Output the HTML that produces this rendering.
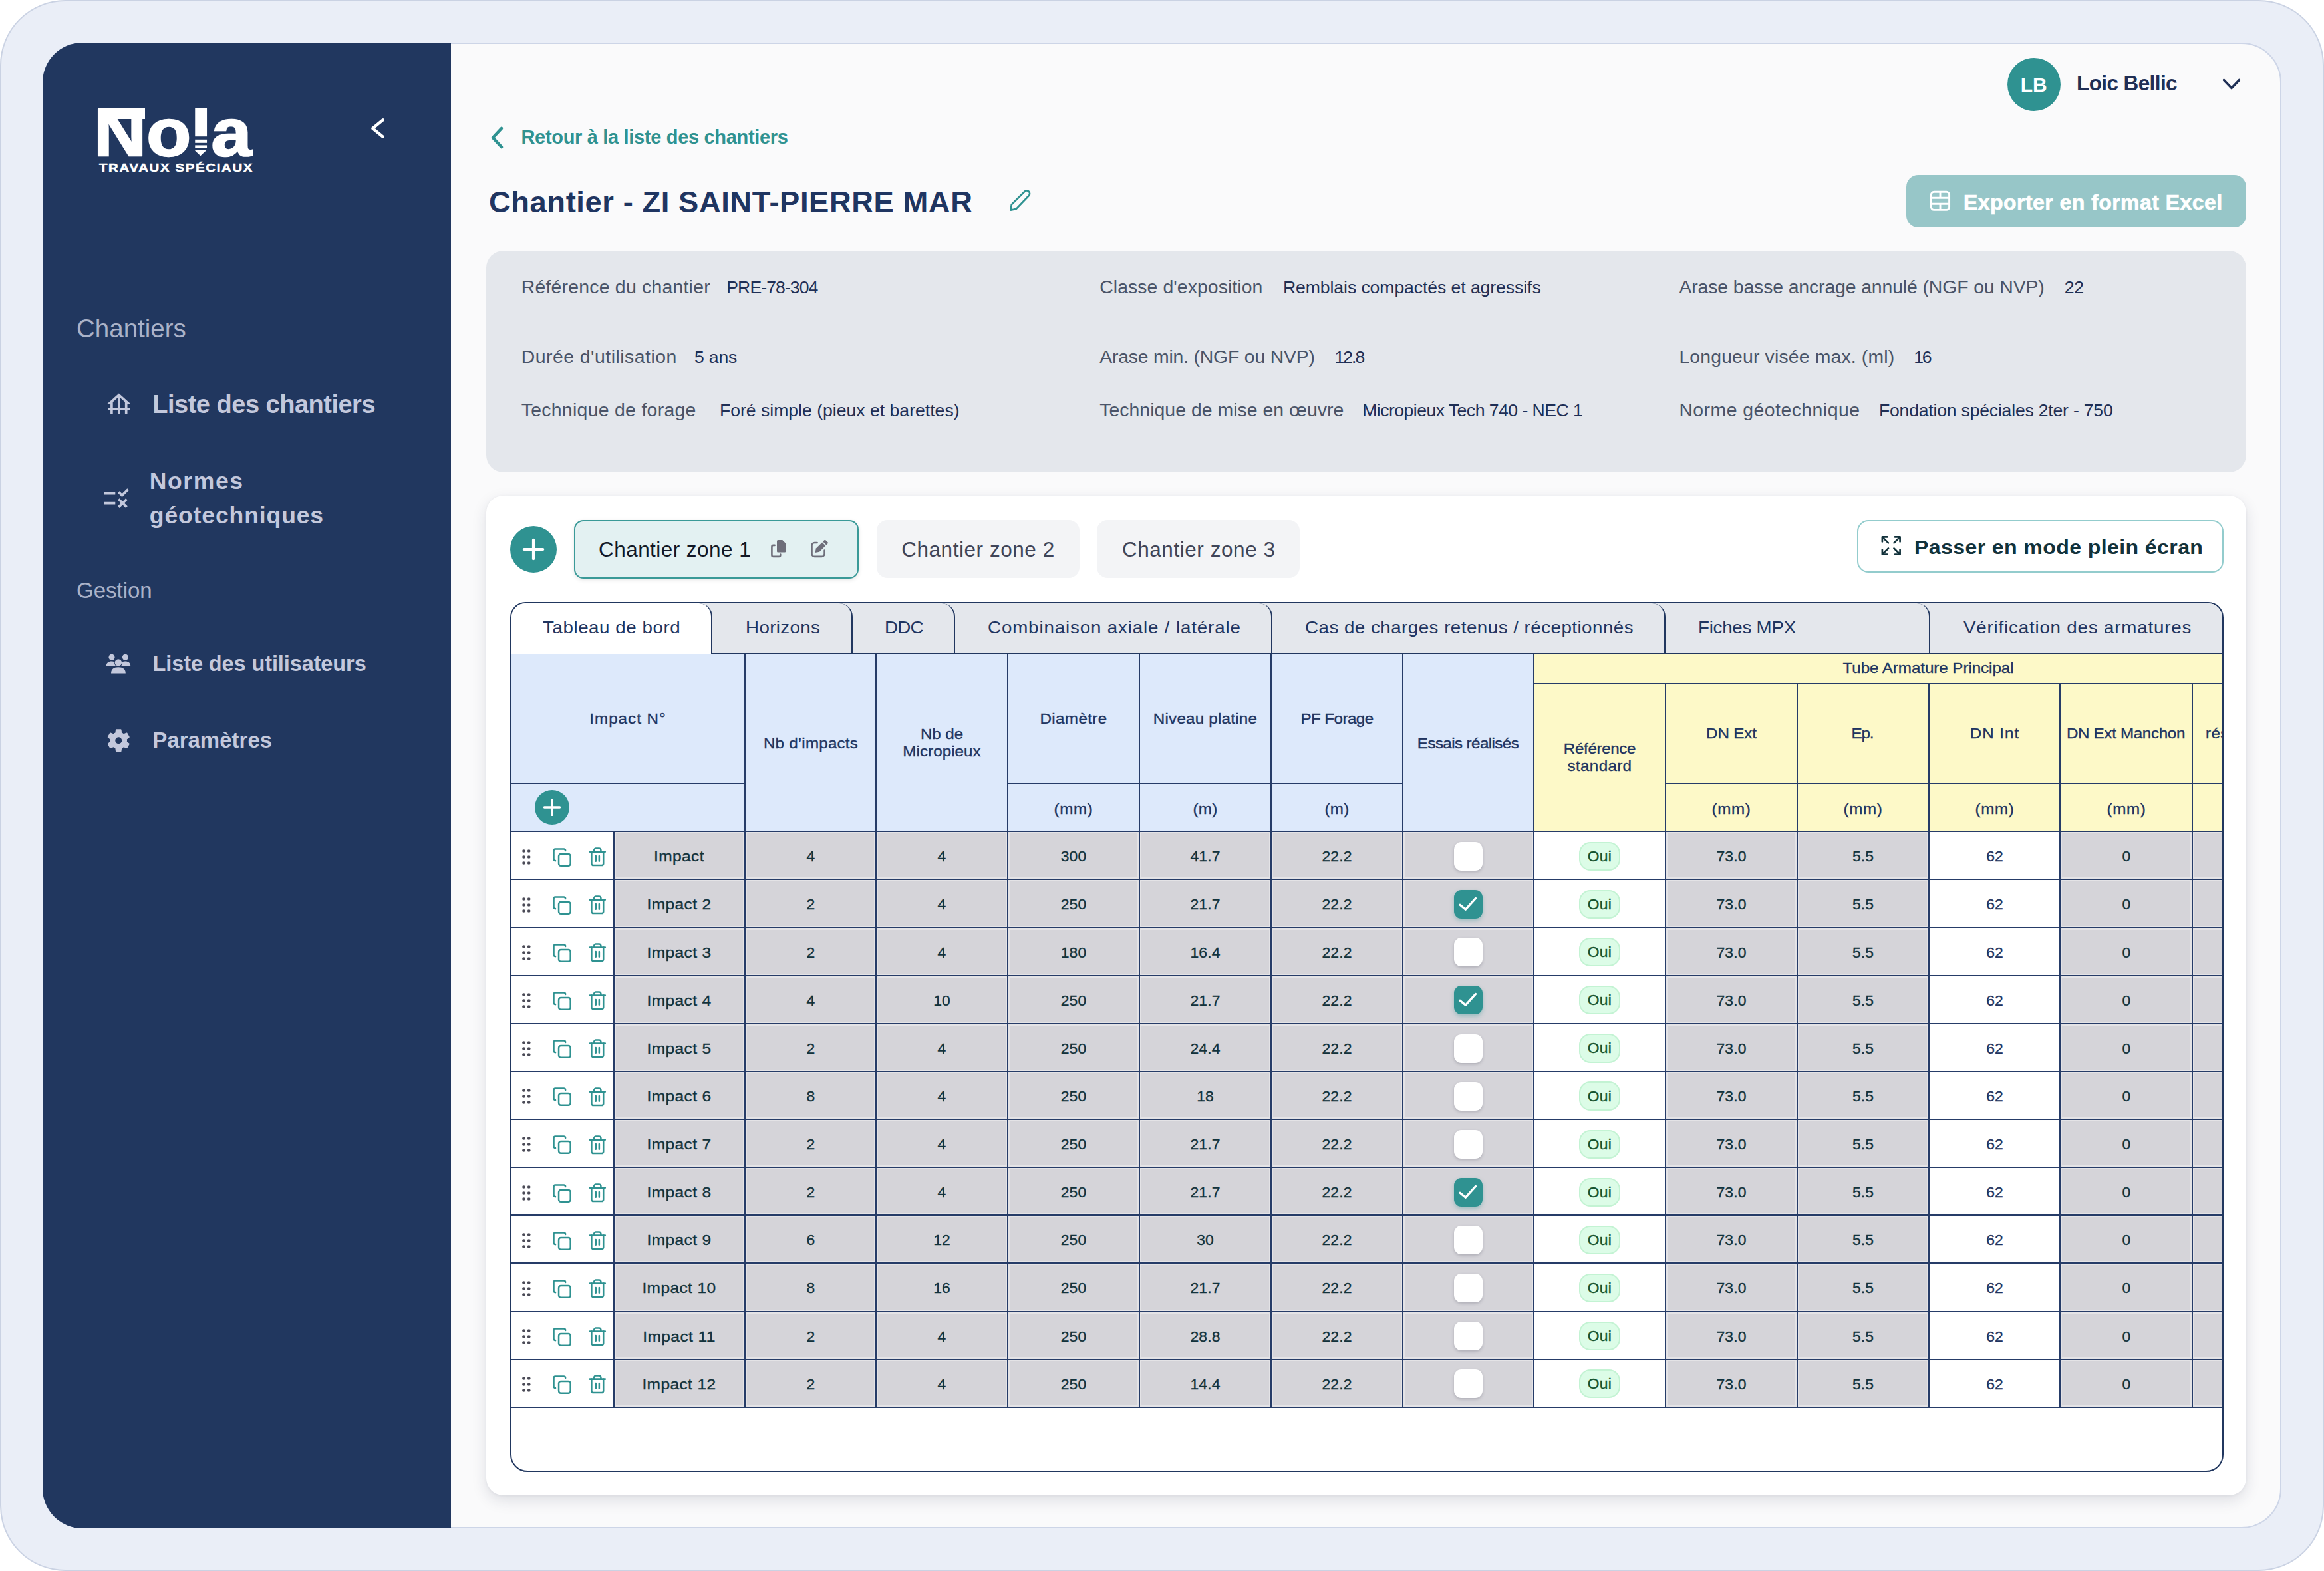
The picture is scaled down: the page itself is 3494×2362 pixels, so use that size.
<!DOCTYPE html>
<html lang="fr"><head><meta charset="utf-8"><title>Nola - Chantier ZI SAINT-PIERRE MAR</title>
<style>
html,body{margin:0;padding:0;}
body{width:3494px;height:2362px;position:relative;overflow:hidden;background:#fff;font-family:"Liberation Sans",sans-serif;}
.b{position:absolute;box-sizing:border-box;}
.t{position:absolute;white-space:nowrap;}
.ln{position:absolute;background:#263c68;}
.m{-webkit-text-stroke:0.35px currentColor;}
.gc{background:#d5d4d9;box-shadow:inset 0 0 0 2px #e4e3e6;}
</style></head><body>
<div class="b " style="left:0.00px;top:0.00px;width:3494.00px;height:2362.00px;background:#eaeef7;border:2px solid #cad2e3;border-radius:98px;"></div>
<div class="b " style="left:64.00px;top:64.00px;width:3366.00px;height:2234.00px;background:#fafafb;border:2px solid #cdd5e7;border-radius:60px;"></div>
<aside>
<div class="b " style="left:64.00px;top:64.00px;width:614.00px;height:2234.00px;background:#21375f;border-radius:60px 0 0 60px;"></div>
<div class="t" style="top:149px;font-size:101px;line-height:101px;font-weight:700;color:#fff;left:140.90px;-webkit-text-stroke:2.5px #fff;transform:scaleX(1.085);transform-origin:0 0;">Nola</div>
<div class="t" style="top:244px;font-size:16.3px;line-height:16.3px;font-weight:700;color:#fff;letter-spacing:1.35px;left:148.60px;-webkit-text-stroke:0.5px #fff;transform:scaleX(1.25);transform-origin:0 0;">TRAVAUX SPÉCIAUX</div>
<div class="b " style="left:148.00px;top:162.00px;width:70.00px;height:16.60px;background:#fff;"></div>
<div class="b " style="left:289.00px;top:150.00px;width:26.00px;height:11.80px;background:#21375f;"></div>
<svg class="b" style="left:289.00px;top:202.00px;" width="26" height="36" viewBox="289 202 26 36"><g fill="#21375f"><rect x="289" y="205.2" width="26" height="4.6"/><rect x="289" y="214.8" width="26" height="3.6"/><rect x="289" y="222.4" width="26" height="3.6"/><path d="M289 226 L292.6 226 L301.4 234.2 L310.2 226 L315 226 L315 238 L289 238 Z"/></g></svg>
<svg class="b" style="left:550.00px;top:170.00px;" width="40" height="46" viewBox="550 170 40 46"><path d="M575.8 180.3 L560.3 193 L575.8 205.7" fill="none" stroke="#fff" stroke-width="4.4" stroke-linecap="round" stroke-linejoin="round"/></svg>
<nav>
<div class="t" style="top:475px;font-size:38.5px;line-height:38.5px;font-weight:400;color:#aab2c8;left:115.00px;">Chantiers</div>
<div class="t" style="top:589px;font-size:38px;line-height:38px;font-weight:700;color:#c3c8dc;letter-spacing:-0.5px;left:229.30px;">Liste des chantiers</div>
<div class="t" style="top:706px;font-size:35.5px;line-height:35.5px;font-weight:700;color:#c3c8dc;letter-spacing:1.6px;left:224.80px;">Normes</div>
<div class="t" style="top:758px;font-size:35.5px;line-height:35.5px;font-weight:700;color:#c3c8dc;letter-spacing:0.9px;left:224.80px;">géotechniques</div>
<div class="t" style="top:871px;font-size:33px;line-height:33px;font-weight:400;color:#aab2c8;left:115.00px;">Gestion</div>
<div class="t" style="top:982px;font-size:32.5px;line-height:32.5px;font-weight:700;color:#c3c8dc;letter-spacing:-0.1px;left:229.50px;">Liste des utilisateurs</div>
<div class="t" style="top:1096px;font-size:33px;line-height:33px;font-weight:700;color:#c3c8dc;left:229.30px;">Paramètres</div>
<svg class="b" style="left:157.00px;top:586.40px;" width="43.6" height="43.6" viewBox="0 0 24 24"><path fill="#c3c8dc" d="M19 12h3L12 3 2 12h3v3H3v2h2v3h2v-3h4v3h2v-3h4v3h2v-3h2v-2h-2v-3zM7 15v-4.81l4-3.6V15H7zm6 0V6.59l4 3.6V15h-4z"/></svg>
<svg class="b" style="left:152.80px;top:727.10px;" width="44.3" height="44.3" viewBox="0 0 24 24"><path fill="#c3c8dc" d="M16.54 11L13 7.46l1.41-1.41 2.12 2.12 4.24-4.24 1.41 1.41L16.54 11zM11 7H2v2h9V7zm10 6.41L19.59 12 17 14.59 14.41 12 13 13.41 15.59 16 13 18.59 14.41 20 17 17.41 19.59 20 21 18.59 18.41 16 21 13.41zM11 15H2v2h9v-2z"/></svg>
<svg class="b" style="left:156.00px;top:980.00px;" width="44" height="36" viewBox="156 980 44 36"><g fill="#c3c8dc"><circle cx="168" cy="988.3" r="4.5"/><circle cx="188.4" cy="988.3" r="4.5"/><circle cx="177.9" cy="996.4" r="5.2"/><path d="M159.9 1001.2 c0 -4.2 3 -6.6 8.1 -6.6 c1.6 0 3 0.3 4.1 0.8 c-0.4 2.4 0.6 4.5 2.2 5.8 z"/><path d="M196.2 1001.2 c0 -4.2 -3 -6.6 -8.1 -6.6 c-1.6 0 -3 0.3 -4.1 0.8 c0.4 2.4 -0.6 4.5 -2.2 5.8 z"/><path d="M167 1012.4 c0 -6 4 -9.1 10.9 -9.1 c6.9 0 10.9 3.1 10.9 9.1 z"/></g></svg>
<svg class="b" style="left:156.70px;top:1091.50px;" width="42.5" height="42.5" viewBox="0 0 24 24"><path fill="#c3c8dc" fill-rule="evenodd" d="M19.14 12.94c.04-.3.06-.61.06-.94 0-.32-.02-.64-.07-.94l2.03-1.58c.18-.14.23-.41.12-.61l-1.92-3.32c-.12-.22-.37-.29-.59-.22l-2.39.96c-.5-.38-1.03-.7-1.62-.94l-.36-2.54c-.04-.24-.24-.41-.48-.41h-3.84c-.24 0-.43.17-.47.41l-.36 2.54c-.59.24-1.13.57-1.62.94l-2.39-.96c-.22-.08-.47 0-.59.22L2.74 8.87c-.12.21-.08.47.12.61l2.03 1.58c-.05.3-.09.63-.09.94s.02.64.07.94l-2.03 1.58c-.18.14-.23.41-.12.61l1.92 3.32c.12.22.37.29.59.22l2.39-.96c.5.38 1.03.7 1.62.94l.36 2.54c.05.24.24.41.48.41h3.84c.24 0 .44-.17.47-.41l.36-2.54c.59-.24 1.13-.56 1.62-.94l2.39.96c.22.08.47 0 .59-.22l1.92-3.32c.12-.22.07-.47-.12-.61l-2.01-1.58zM12 14.8c-1.55 0-2.8-1.25-2.8-2.8s1.25-2.8 2.8-2.8 2.8 1.25 2.8 2.8-1.25 2.8-2.8 2.8z"/></svg>
</nav></aside>
<header>
<div class="b " style="left:3017.70px;top:87.00px;width:80.00px;height:80.00px;background:#2f9291;border-radius:50%;"></div>
<div class="t" style="top:113px;font-size:30px;line-height:30px;font-weight:700;color:#fff;left:2057.70px;width:2000px;text-align:center;">LB</div>
<div class="t" style="top:110px;font-size:31.5px;line-height:31.5px;font-weight:700;color:#1f2f55;letter-spacing:-0.6px;left:3122.00px;">Loic Bellic</div>
<svg class="b" style="left:3339.50px;top:117.00px;" width="30" height="20" viewBox="0 0 30 20"><path d="M3.5 3.5 L15 15.5 L26.5 3.5" fill="none" stroke="#1f2f55" stroke-width="3.6" stroke-linecap="round" stroke-linejoin="round"/></svg>
</header>
<main>
<svg class="b" style="left:734.00px;top:188.00px;" width="28" height="38" viewBox="0 0 28 38"><path d="M20 5 L7 19 L20 33" fill="none" stroke="#2f9291" stroke-width="4.6" stroke-linecap="round" stroke-linejoin="round"/></svg>
<div class="t" style="top:192px;font-size:29px;line-height:29px;font-weight:700;color:#2f9291;letter-spacing:-0.32px;left:783.50px;">Retour à la liste des chantiers</div>
<div class="t" style="top:283px;font-size:43.6px;line-height:43.6px;font-weight:700;color:#1f3561;letter-spacing:0.55px;left:734.50px;transform:scaleX(1.04);transform-origin:0 50%;">Chantier - ZI SAINT-PIERRE MAR</div>
<svg class="b" style="left:1510.00px;top:280.00px;" width="46" height="44" viewBox="1510 280 46 44"><path d="M1520.8 307.4 L1540.8 287.5 A4.4 4.4 0 0 1 1547 293.7 L1527.9 313.9 L1519.6 315.6 Z" fill="none" stroke="#2f9291" stroke-width="2.7" stroke-linejoin="round"/></svg>
<div class="b " style="left:2866.00px;top:263.00px;width:511.00px;height:78.50px;background:#97c6c8;border-radius:18px;"></div>
<svg class="b" style="left:2898.00px;top:283.00px;" width="38" height="38" viewBox="2898 283 38 38"><g fill="none" stroke="#fff" stroke-width="2.9"><rect x="2903.4" y="288.2" width="27.2" height="27.2" rx="4.2"/><path d="M2903.4 297.3 H2930.6 M2903.4 306.2 H2930.6 M2917 288.2 V297.3 M2917 306.2 V315.4"/></g></svg>
<div class="t" style="top:288px;font-size:32px;line-height:32px;font-weight:700;color:#fff;letter-spacing:0.45px;left:2952.00px;-webkit-text-stroke:0.7px #fff;">Exporter en format Excel</div>
<section>
<div class="b " style="left:731.00px;top:377.00px;width:2646.00px;height:333.00px;background:#e4e7ec;border-radius:26px;"></div>
<div class="t" style="top:417px;font-size:28.4px;line-height:28.4px;font-weight:400;color:#4a5468;letter-spacing:0.23px;left:783.70px;">Référence du chantier</div>
<div class="t" style="top:419px;font-size:26.6px;line-height:26.6px;font-weight:400;color:#1f2f55;letter-spacing:-0.92px;left:1092.30px;">PRE-78-304</div>
<div class="t" style="top:522px;font-size:28.4px;line-height:28.4px;font-weight:400;color:#4a5468;letter-spacing:0.49px;left:783.70px;">Durée d'utilisation</div>
<div class="t" style="top:524px;font-size:26.6px;line-height:26.6px;font-weight:400;color:#1f2f55;letter-spacing:-0.14px;left:1043.90px;">5 ans</div>
<div class="t" style="top:602px;font-size:28.4px;line-height:28.4px;font-weight:400;color:#4a5468;letter-spacing:0.3px;left:783.70px;">Technique de forage</div>
<div class="t" style="top:604px;font-size:26.6px;line-height:26.6px;font-weight:400;color:#1f2f55;left:1081.90px;">Foré simple (pieux et barettes)</div>
<div class="t" style="top:417px;font-size:28.4px;line-height:28.4px;font-weight:400;color:#4a5468;letter-spacing:0.08px;left:1653.20px;">Classe d'exposition</div>
<div class="t" style="top:419px;font-size:26.6px;line-height:26.6px;font-weight:400;color:#1f2f55;letter-spacing:-0.08px;left:1928.90px;">Remblais compactés et agressifs</div>
<div class="t" style="top:522px;font-size:28.4px;line-height:28.4px;font-weight:400;color:#4a5468;letter-spacing:-0.2px;left:1653.20px;">Arase min. (NGF ou NVP)</div>
<div class="t" style="top:524px;font-size:26.6px;line-height:26.6px;font-weight:400;color:#1f2f55;letter-spacing:-1.96px;left:2006.40px;">12.8</div>
<div class="t" style="top:602px;font-size:28.4px;line-height:28.4px;font-weight:400;color:#4a5468;letter-spacing:0.04px;left:1653.20px;">Technique de mise en œuvre</div>
<div class="t" style="top:604px;font-size:26.6px;line-height:26.6px;font-weight:400;color:#1f2f55;letter-spacing:-0.53px;left:2048.20px;">Micropieux Tech 740 - NEC 1</div>
<div class="t" style="top:417px;font-size:28.4px;line-height:28.4px;font-weight:400;color:#4a5468;letter-spacing:-0.12px;left:2524.40px;">Arase basse ancrage annulé (NGF ou NVP)</div>
<div class="t" style="top:419px;font-size:26.6px;line-height:26.6px;font-weight:400;color:#1f2f55;letter-spacing:-0.39px;left:3103.80px;">22</div>
<div class="t" style="top:522px;font-size:28.4px;line-height:28.4px;font-weight:400;color:#4a5468;letter-spacing:0.15px;left:2524.40px;">Longueur visée max. (ml)</div>
<div class="t" style="top:524px;font-size:26.6px;line-height:26.6px;font-weight:400;color:#1f2f55;letter-spacing:-2.29px;left:2877.20px;">16</div>
<div class="t" style="top:602px;font-size:28.4px;line-height:28.4px;font-weight:400;color:#4a5468;letter-spacing:0.47px;left:2524.40px;">Norme géotechnique</div>
<div class="t" style="top:604px;font-size:26.6px;line-height:26.6px;font-weight:400;color:#1f2f55;letter-spacing:-0.21px;left:2825.00px;">Fondation spéciales 2ter - 750</div>
</section>
<section>
<div class="b " style="left:731.00px;top:745.00px;width:2646.00px;height:1503.00px;background:#fff;border-radius:26px;box-shadow:0 8px 22px rgba(30,40,70,0.13),0 1px 4px rgba(30,40,70,0.06);"></div>
<div class="b " style="left:767.00px;top:790.60px;width:70.00px;height:70.00px;background:#2f9291;border-radius:50%;"></div>
<svg class="b" style="left:785.00px;top:808.70px;" width="34" height="34" viewBox="0 0 34 34"><path d="M17 2.8 V31.2 M2.8 17 H31.2" stroke="#fff" stroke-width="4.2" stroke-linecap="round"/></svg>
<div class="b " style="left:863.00px;top:781.50px;width:428.00px;height:88.00px;background:#e3f1f2;border:2px solid #3a9a98;border-radius:14px;box-shadow:0 2px 6px rgba(0,0,0,0.10);"></div>
<div class="t" style="top:811px;font-size:31.5px;line-height:31.5px;font-weight:400;color:#111827;letter-spacing:0.45px;left:900.00px;">Chantier zone 1</div>
<svg class="b" style="left:1150.00px;top:805.00px;" width="100" height="40" viewBox="1150 805 100 40"><g fill="none" stroke="#6e6e7a" stroke-width="2.6" stroke-linecap="round" stroke-linejoin="round"><path d="M1164.6 819.9 H1162.6 a2.2 2.2 0 0 0 -2.2 2.2 V834.7 a2.2 2.2 0 0 0 2.2 2.2 H1171.1 a2.2 2.2 0 0 0 2.2 -2.2 V833.6"/><path d="M1228.6 816 H1224.7 a4.2 4.2 0 0 0 -4.2 4.2 V832.7 a4.2 4.2 0 0 0 4.2 4.2 H1235.4 a4.2 4.2 0 0 0 4.2 -4.2 V827.5"/></g><g fill="#6e6e7a"><path d="M1169.6 812 H1176.3 L1181.3 817 V829 a1.6 1.6 0 0 1 -1.6 1.6 H1169.6 a1.6 1.6 0 0 1 -1.6 -1.6 V813.6 a1.6 1.6 0 0 1 1.6 -1.6 z"/><path d="M1225.5 831 L1226.9 824.6 L1236.1 815.4 L1241.2 820.5 L1232 829.7 z"/><path d="M1237.2 814.3 L1239.3 812.2 a1.5 1.5 0 0 1 2.1 0 L1244.4 815.2 a1.5 1.5 0 0 1 0 2.1 L1242.3 819.4 z"/></g></svg>
<div class="b " style="left:1317.60px;top:782.30px;width:305.10px;height:87.20px;background:#f3f4f6;border-radius:16px;"></div>
<div class="t" style="top:811px;font-size:31.5px;line-height:31.5px;font-weight:400;color:#404558;letter-spacing:0.55px;left:470.48px;width:2000px;text-align:center;">Chantier zone 2</div>
<div class="b " style="left:1649.00px;top:782.30px;width:305.00px;height:87.20px;background:#f3f4f6;border-radius:16px;"></div>
<div class="t" style="top:811px;font-size:31.5px;line-height:31.5px;font-weight:400;color:#404558;letter-spacing:0.55px;left:802.27px;width:2000px;text-align:center;">Chantier zone 3</div>
<div class="b " style="left:2792.00px;top:782.00px;width:551.00px;height:79.00px;background:#fff;border:2px solid #93cccd;border-radius:17px;"></div>
<svg class="b" style="left:2822.00px;top:800.00px;" width="42" height="42" viewBox="2822 800 42 42"><g fill="none" stroke="#12323b" stroke-width="2.7" stroke-linecap="round" stroke-linejoin="round"><path d="M2829.9 814.5 V807.4 H2837.5 M2829.9 807.4 L2839 816.4"/><path d="M2849 807.4 H2856.6 V814.5 M2856.6 807.4 L2847.5 816.4"/><path d="M2829.9 826.4 V833.5 H2837.5 M2829.9 833.5 L2839 824.5"/><path d="M2849 833.5 H2856.6 V826.4 M2856.6 833.5 L2847.5 824.5"/></g></svg>
<div class="t" style="top:808px;font-size:30px;line-height:30px;font-weight:700;color:#12323b;letter-spacing:0.35px;left:2877.50px;transform:scaleX(1.07);transform-origin:0 50%;">Passer en mode plein écran</div>
<div class="b" style="left:767px;top:905px;width:2576px;height:1308px;border:2px solid #21375f;border-radius:23px 23px 26px 26px;overflow:hidden;background:#fff;">
<div class="b" style="left:-769px;top:-907px;width:3494px;height:2362px;">
<div class="b " style="left:769.00px;top:907.00px;width:302.00px;height:77.00px;background:#fff;border-right:2px solid #21375f;border-top-right-radius:20px;z-index:20;"></div>
<div class="t" style="top:930px;font-size:26.2px;line-height:26.2px;font-weight:400;color:#1f3561;letter-spacing:0.52px;left:815.80px;transform:scaleX(1.06);transform-origin:0 50%;z-index:30;">Tableau de bord</div>
<div class="b " style="left:1047.00px;top:907.00px;width:235.00px;height:77.00px;background:#e4e7ec;border-right:2px solid #21375f;border-bottom:2px solid #21375f;border-top-right-radius:20px;z-index:19;"></div>
<div class="t" style="top:930px;font-size:26.2px;line-height:26.2px;font-weight:400;color:#1f3561;letter-spacing:0.33px;left:1120.80px;transform:scaleX(1.06);transform-origin:0 50%;z-index:30;">Horizons</div>
<div class="b " style="left:1258.00px;top:907.00px;width:178.00px;height:77.00px;background:#e4e7ec;border-right:2px solid #21375f;border-bottom:2px solid #21375f;border-top-right-radius:20px;z-index:18;"></div>
<div class="t" style="top:930px;font-size:26.2px;line-height:26.2px;font-weight:400;color:#1f3561;letter-spacing:-0.74px;left:1329.80px;transform:scaleX(1.06);transform-origin:0 50%;z-index:30;">DDC</div>
<div class="b " style="left:1412.00px;top:907.00px;width:501.00px;height:77.00px;background:#e4e7ec;border-right:2px solid #21375f;border-bottom:2px solid #21375f;border-top-right-radius:20px;z-index:17;"></div>
<div class="t" style="top:930px;font-size:26.2px;line-height:26.2px;font-weight:400;color:#1f3561;letter-spacing:0.79px;left:1484.80px;transform:scaleX(1.06);transform-origin:0 50%;z-index:30;">Combinaison axiale / latérale</div>
<div class="b " style="left:1889.00px;top:907.00px;width:615.00px;height:77.00px;background:#e4e7ec;border-right:2px solid #21375f;border-bottom:2px solid #21375f;border-top-right-radius:20px;z-index:16;"></div>
<div class="t" style="top:930px;font-size:26.2px;line-height:26.2px;font-weight:400;color:#1f3561;letter-spacing:0.44px;left:1961.80px;transform:scaleX(1.06);transform-origin:0 50%;z-index:30;">Cas de charges retenus / réceptionnés</div>
<div class="b " style="left:2480.00px;top:907.00px;width:422.00px;height:77.00px;background:#e4e7ec;border-right:2px solid #21375f;border-bottom:2px solid #21375f;border-top-right-radius:20px;z-index:15;"></div>
<div class="t" style="top:930px;font-size:26.2px;line-height:26.2px;font-weight:400;color:#1f3561;letter-spacing:-0.26px;left:2552.80px;transform:scaleX(1.06);transform-origin:0 50%;z-index:30;">Fiches MPX</div>
<div class="b " style="left:2878.00px;top:907.00px;width:463.00px;height:77.00px;background:#e4e7ec;border-bottom:2px solid #21375f;z-index:14;"></div>
<div class="t" style="top:930px;font-size:26.2px;line-height:26.2px;font-weight:400;color:#1f3561;letter-spacing:0.75px;left:2952.20px;transform:scaleX(1.06);transform-origin:0 50%;z-index:30;">Vérification des armatures</div>
<div class="b " style="left:769.00px;top:984.00px;width:1537.00px;height:266.00px;background:#dde9fb;"></div>
<div class="b " style="left:2306.00px;top:984.00px;width:1035.00px;height:266.00px;background:#fdf9c8;"></div>
<div class="b gc" style="left:924.00px;top:1251.00px;width:195.00px;height:70.00px;"></div>
<div class="b gc" style="left:924.00px;top:1323.00px;width:195.00px;height:71.00px;"></div>
<div class="b gc" style="left:924.00px;top:1396.00px;width:195.00px;height:70.00px;"></div>
<div class="b gc" style="left:924.00px;top:1468.00px;width:195.00px;height:70.00px;"></div>
<div class="b gc" style="left:924.00px;top:1540.00px;width:195.00px;height:70.00px;"></div>
<div class="b gc" style="left:924.00px;top:1612.00px;width:195.00px;height:70.00px;"></div>
<div class="b gc" style="left:924.00px;top:1684.00px;width:195.00px;height:70.00px;"></div>
<div class="b gc" style="left:924.00px;top:1756.00px;width:195.00px;height:70.00px;"></div>
<div class="b gc" style="left:924.00px;top:1828.00px;width:195.00px;height:70.00px;"></div>
<div class="b gc" style="left:924.00px;top:1900.00px;width:195.00px;height:71.00px;"></div>
<div class="b gc" style="left:924.00px;top:1973.00px;width:195.00px;height:70.00px;"></div>
<div class="b gc" style="left:924.00px;top:2045.00px;width:195.00px;height:70.00px;"></div>
<div class="b gc" style="left:1121.00px;top:1251.00px;width:195.00px;height:70.00px;"></div>
<div class="b gc" style="left:1121.00px;top:1323.00px;width:195.00px;height:71.00px;"></div>
<div class="b gc" style="left:1121.00px;top:1396.00px;width:195.00px;height:70.00px;"></div>
<div class="b gc" style="left:1121.00px;top:1468.00px;width:195.00px;height:70.00px;"></div>
<div class="b gc" style="left:1121.00px;top:1540.00px;width:195.00px;height:70.00px;"></div>
<div class="b gc" style="left:1121.00px;top:1612.00px;width:195.00px;height:70.00px;"></div>
<div class="b gc" style="left:1121.00px;top:1684.00px;width:195.00px;height:70.00px;"></div>
<div class="b gc" style="left:1121.00px;top:1756.00px;width:195.00px;height:70.00px;"></div>
<div class="b gc" style="left:1121.00px;top:1828.00px;width:195.00px;height:70.00px;"></div>
<div class="b gc" style="left:1121.00px;top:1900.00px;width:195.00px;height:71.00px;"></div>
<div class="b gc" style="left:1121.00px;top:1973.00px;width:195.00px;height:70.00px;"></div>
<div class="b gc" style="left:1121.00px;top:2045.00px;width:195.00px;height:70.00px;"></div>
<div class="b gc" style="left:1318.00px;top:1251.00px;width:196.00px;height:70.00px;"></div>
<div class="b gc" style="left:1318.00px;top:1323.00px;width:196.00px;height:71.00px;"></div>
<div class="b gc" style="left:1318.00px;top:1396.00px;width:196.00px;height:70.00px;"></div>
<div class="b gc" style="left:1318.00px;top:1468.00px;width:196.00px;height:70.00px;"></div>
<div class="b gc" style="left:1318.00px;top:1540.00px;width:196.00px;height:70.00px;"></div>
<div class="b gc" style="left:1318.00px;top:1612.00px;width:196.00px;height:70.00px;"></div>
<div class="b gc" style="left:1318.00px;top:1684.00px;width:196.00px;height:70.00px;"></div>
<div class="b gc" style="left:1318.00px;top:1756.00px;width:196.00px;height:70.00px;"></div>
<div class="b gc" style="left:1318.00px;top:1828.00px;width:196.00px;height:70.00px;"></div>
<div class="b gc" style="left:1318.00px;top:1900.00px;width:196.00px;height:71.00px;"></div>
<div class="b gc" style="left:1318.00px;top:1973.00px;width:196.00px;height:70.00px;"></div>
<div class="b gc" style="left:1318.00px;top:2045.00px;width:196.00px;height:70.00px;"></div>
<div class="b gc" style="left:1516.00px;top:1251.00px;width:196.00px;height:70.00px;"></div>
<div class="b gc" style="left:1516.00px;top:1323.00px;width:196.00px;height:71.00px;"></div>
<div class="b gc" style="left:1516.00px;top:1396.00px;width:196.00px;height:70.00px;"></div>
<div class="b gc" style="left:1516.00px;top:1468.00px;width:196.00px;height:70.00px;"></div>
<div class="b gc" style="left:1516.00px;top:1540.00px;width:196.00px;height:70.00px;"></div>
<div class="b gc" style="left:1516.00px;top:1612.00px;width:196.00px;height:70.00px;"></div>
<div class="b gc" style="left:1516.00px;top:1684.00px;width:196.00px;height:70.00px;"></div>
<div class="b gc" style="left:1516.00px;top:1756.00px;width:196.00px;height:70.00px;"></div>
<div class="b gc" style="left:1516.00px;top:1828.00px;width:196.00px;height:70.00px;"></div>
<div class="b gc" style="left:1516.00px;top:1900.00px;width:196.00px;height:71.00px;"></div>
<div class="b gc" style="left:1516.00px;top:1973.00px;width:196.00px;height:70.00px;"></div>
<div class="b gc" style="left:1516.00px;top:2045.00px;width:196.00px;height:70.00px;"></div>
<div class="b gc" style="left:1714.00px;top:1251.00px;width:196.00px;height:70.00px;"></div>
<div class="b gc" style="left:1714.00px;top:1323.00px;width:196.00px;height:71.00px;"></div>
<div class="b gc" style="left:1714.00px;top:1396.00px;width:196.00px;height:70.00px;"></div>
<div class="b gc" style="left:1714.00px;top:1468.00px;width:196.00px;height:70.00px;"></div>
<div class="b gc" style="left:1714.00px;top:1540.00px;width:196.00px;height:70.00px;"></div>
<div class="b gc" style="left:1714.00px;top:1612.00px;width:196.00px;height:70.00px;"></div>
<div class="b gc" style="left:1714.00px;top:1684.00px;width:196.00px;height:70.00px;"></div>
<div class="b gc" style="left:1714.00px;top:1756.00px;width:196.00px;height:70.00px;"></div>
<div class="b gc" style="left:1714.00px;top:1828.00px;width:196.00px;height:70.00px;"></div>
<div class="b gc" style="left:1714.00px;top:1900.00px;width:196.00px;height:71.00px;"></div>
<div class="b gc" style="left:1714.00px;top:1973.00px;width:196.00px;height:70.00px;"></div>
<div class="b gc" style="left:1714.00px;top:2045.00px;width:196.00px;height:70.00px;"></div>
<div class="b gc" style="left:1912.00px;top:1251.00px;width:196.00px;height:70.00px;"></div>
<div class="b gc" style="left:1912.00px;top:1323.00px;width:196.00px;height:71.00px;"></div>
<div class="b gc" style="left:1912.00px;top:1396.00px;width:196.00px;height:70.00px;"></div>
<div class="b gc" style="left:1912.00px;top:1468.00px;width:196.00px;height:70.00px;"></div>
<div class="b gc" style="left:1912.00px;top:1540.00px;width:196.00px;height:70.00px;"></div>
<div class="b gc" style="left:1912.00px;top:1612.00px;width:196.00px;height:70.00px;"></div>
<div class="b gc" style="left:1912.00px;top:1684.00px;width:196.00px;height:70.00px;"></div>
<div class="b gc" style="left:1912.00px;top:1756.00px;width:196.00px;height:70.00px;"></div>
<div class="b gc" style="left:1912.00px;top:1828.00px;width:196.00px;height:70.00px;"></div>
<div class="b gc" style="left:1912.00px;top:1900.00px;width:196.00px;height:71.00px;"></div>
<div class="b gc" style="left:1912.00px;top:1973.00px;width:196.00px;height:70.00px;"></div>
<div class="b gc" style="left:1912.00px;top:2045.00px;width:196.00px;height:70.00px;"></div>
<div class="b gc" style="left:2110.00px;top:1251.00px;width:195.00px;height:70.00px;"></div>
<div class="b gc" style="left:2110.00px;top:1323.00px;width:195.00px;height:71.00px;"></div>
<div class="b gc" style="left:2110.00px;top:1396.00px;width:195.00px;height:70.00px;"></div>
<div class="b gc" style="left:2110.00px;top:1468.00px;width:195.00px;height:70.00px;"></div>
<div class="b gc" style="left:2110.00px;top:1540.00px;width:195.00px;height:70.00px;"></div>
<div class="b gc" style="left:2110.00px;top:1612.00px;width:195.00px;height:70.00px;"></div>
<div class="b gc" style="left:2110.00px;top:1684.00px;width:195.00px;height:70.00px;"></div>
<div class="b gc" style="left:2110.00px;top:1756.00px;width:195.00px;height:70.00px;"></div>
<div class="b gc" style="left:2110.00px;top:1828.00px;width:195.00px;height:70.00px;"></div>
<div class="b gc" style="left:2110.00px;top:1900.00px;width:195.00px;height:71.00px;"></div>
<div class="b gc" style="left:2110.00px;top:1973.00px;width:195.00px;height:70.00px;"></div>
<div class="b gc" style="left:2110.00px;top:2045.00px;width:195.00px;height:70.00px;"></div>
<div class="b gc" style="left:2505.00px;top:1251.00px;width:196.00px;height:70.00px;"></div>
<div class="b gc" style="left:2505.00px;top:1323.00px;width:196.00px;height:71.00px;"></div>
<div class="b gc" style="left:2505.00px;top:1396.00px;width:196.00px;height:70.00px;"></div>
<div class="b gc" style="left:2505.00px;top:1468.00px;width:196.00px;height:70.00px;"></div>
<div class="b gc" style="left:2505.00px;top:1540.00px;width:196.00px;height:70.00px;"></div>
<div class="b gc" style="left:2505.00px;top:1612.00px;width:196.00px;height:70.00px;"></div>
<div class="b gc" style="left:2505.00px;top:1684.00px;width:196.00px;height:70.00px;"></div>
<div class="b gc" style="left:2505.00px;top:1756.00px;width:196.00px;height:70.00px;"></div>
<div class="b gc" style="left:2505.00px;top:1828.00px;width:196.00px;height:70.00px;"></div>
<div class="b gc" style="left:2505.00px;top:1900.00px;width:196.00px;height:71.00px;"></div>
<div class="b gc" style="left:2505.00px;top:1973.00px;width:196.00px;height:70.00px;"></div>
<div class="b gc" style="left:2505.00px;top:2045.00px;width:196.00px;height:70.00px;"></div>
<div class="b gc" style="left:2703.00px;top:1251.00px;width:196.00px;height:70.00px;"></div>
<div class="b gc" style="left:2703.00px;top:1323.00px;width:196.00px;height:71.00px;"></div>
<div class="b gc" style="left:2703.00px;top:1396.00px;width:196.00px;height:70.00px;"></div>
<div class="b gc" style="left:2703.00px;top:1468.00px;width:196.00px;height:70.00px;"></div>
<div class="b gc" style="left:2703.00px;top:1540.00px;width:196.00px;height:70.00px;"></div>
<div class="b gc" style="left:2703.00px;top:1612.00px;width:196.00px;height:70.00px;"></div>
<div class="b gc" style="left:2703.00px;top:1684.00px;width:196.00px;height:70.00px;"></div>
<div class="b gc" style="left:2703.00px;top:1756.00px;width:196.00px;height:70.00px;"></div>
<div class="b gc" style="left:2703.00px;top:1828.00px;width:196.00px;height:70.00px;"></div>
<div class="b gc" style="left:2703.00px;top:1900.00px;width:196.00px;height:71.00px;"></div>
<div class="b gc" style="left:2703.00px;top:1973.00px;width:196.00px;height:70.00px;"></div>
<div class="b gc" style="left:2703.00px;top:2045.00px;width:196.00px;height:70.00px;"></div>
<div class="b gc" style="left:3098.00px;top:1251.00px;width:197.00px;height:70.00px;"></div>
<div class="b gc" style="left:3098.00px;top:1323.00px;width:197.00px;height:71.00px;"></div>
<div class="b gc" style="left:3098.00px;top:1396.00px;width:197.00px;height:70.00px;"></div>
<div class="b gc" style="left:3098.00px;top:1468.00px;width:197.00px;height:70.00px;"></div>
<div class="b gc" style="left:3098.00px;top:1540.00px;width:197.00px;height:70.00px;"></div>
<div class="b gc" style="left:3098.00px;top:1612.00px;width:197.00px;height:70.00px;"></div>
<div class="b gc" style="left:3098.00px;top:1684.00px;width:197.00px;height:70.00px;"></div>
<div class="b gc" style="left:3098.00px;top:1756.00px;width:197.00px;height:70.00px;"></div>
<div class="b gc" style="left:3098.00px;top:1828.00px;width:197.00px;height:70.00px;"></div>
<div class="b gc" style="left:3098.00px;top:1900.00px;width:197.00px;height:71.00px;"></div>
<div class="b gc" style="left:3098.00px;top:1973.00px;width:197.00px;height:70.00px;"></div>
<div class="b gc" style="left:3098.00px;top:2045.00px;width:197.00px;height:70.00px;"></div>
<div class="b gc" style="left:3297.00px;top:1251.00px;width:196.00px;height:70.00px;"></div>
<div class="b gc" style="left:3297.00px;top:1323.00px;width:196.00px;height:71.00px;"></div>
<div class="b gc" style="left:3297.00px;top:1396.00px;width:196.00px;height:70.00px;"></div>
<div class="b gc" style="left:3297.00px;top:1468.00px;width:196.00px;height:70.00px;"></div>
<div class="b gc" style="left:3297.00px;top:1540.00px;width:196.00px;height:70.00px;"></div>
<div class="b gc" style="left:3297.00px;top:1612.00px;width:196.00px;height:70.00px;"></div>
<div class="b gc" style="left:3297.00px;top:1684.00px;width:196.00px;height:70.00px;"></div>
<div class="b gc" style="left:3297.00px;top:1756.00px;width:196.00px;height:70.00px;"></div>
<div class="b gc" style="left:3297.00px;top:1828.00px;width:196.00px;height:70.00px;"></div>
<div class="b gc" style="left:3297.00px;top:1900.00px;width:196.00px;height:71.00px;"></div>
<div class="b gc" style="left:3297.00px;top:1973.00px;width:196.00px;height:70.00px;"></div>
<div class="b gc" style="left:3297.00px;top:2045.00px;width:196.00px;height:70.00px;"></div>
<div class="ln" style="left:922px;top:1249px;width:2px;height:868px"></div>
<div class="ln" style="left:1119px;top:984px;width:2px;height:1133px"></div>
<div class="ln" style="left:1316px;top:984px;width:2px;height:1133px"></div>
<div class="ln" style="left:1514px;top:984px;width:2px;height:1133px"></div>
<div class="ln" style="left:1712px;top:984px;width:2px;height:1133px"></div>
<div class="ln" style="left:1910px;top:984px;width:2px;height:1133px"></div>
<div class="ln" style="left:2108px;top:984px;width:2px;height:1133px"></div>
<div class="ln" style="left:2305px;top:984px;width:2px;height:1133px"></div>
<div class="ln" style="left:2503px;top:1027px;width:2px;height:1090px"></div>
<div class="ln" style="left:2701px;top:1027px;width:2px;height:1090px"></div>
<div class="ln" style="left:2899px;top:1027px;width:2px;height:1090px"></div>
<div class="ln" style="left:3096px;top:1027px;width:2px;height:1090px"></div>
<div class="ln" style="left:3295px;top:1027px;width:2px;height:1090px"></div>
<div class="ln" style="left:2307px;top:1027px;width:1034px;height:2px"></div>
<div class="ln" style="left:769px;top:1177px;width:350px;height:2px"></div>
<div class="ln" style="left:1516px;top:1177px;width:592px;height:2px"></div>
<div class="ln" style="left:2505px;top:1177px;width:836px;height:2px"></div>
<div class="ln" style="left:769px;top:1249px;width:2572px;height:2px"></div>
<div class="ln" style="left:769px;top:1321px;width:2572px;height:2px"></div>
<div class="ln" style="left:769px;top:1394px;width:2572px;height:2px"></div>
<div class="ln" style="left:769px;top:1466px;width:2572px;height:2px"></div>
<div class="ln" style="left:769px;top:1538px;width:2572px;height:2px"></div>
<div class="ln" style="left:769px;top:1610px;width:2572px;height:2px"></div>
<div class="ln" style="left:769px;top:1682px;width:2572px;height:2px"></div>
<div class="ln" style="left:769px;top:1754px;width:2572px;height:2px"></div>
<div class="ln" style="left:769px;top:1826px;width:2572px;height:2px"></div>
<div class="ln" style="left:769px;top:1898px;width:2572px;height:2px"></div>
<div class="ln" style="left:769px;top:1971px;width:2572px;height:2px"></div>
<div class="ln" style="left:769px;top:2043px;width:2572px;height:2px"></div>
<div class="ln" style="left:769px;top:2115px;width:2572px;height:2px"></div>
<div class="t m" style="top:1070px;font-size:22.2px;line-height:22.2px;font-weight:400;color:#1f3561;letter-spacing:0.9px;left:-55.85px;width:2000px;text-align:center;transform:scaleX(1.09);">Impact N°</div>
<div class="t m" style="top:1107px;font-size:22.2px;line-height:22.2px;font-weight:400;color:#1f3561;letter-spacing:0.18px;left:218.59px;width:2000px;text-align:center;transform:scaleX(1.09);">Nb d’impacts</div>
<div class="t m" style="top:1093px;font-size:22.2px;line-height:22.2px;font-weight:400;color:#1f3561;letter-spacing:-0.06px;left:415.97px;width:2000px;text-align:center;transform:scaleX(1.09);">Nb de</div>
<div class="t m" style="top:1119px;font-size:22.2px;line-height:22.2px;font-weight:400;color:#1f3561;letter-spacing:0.04px;left:416.02px;width:2000px;text-align:center;transform:scaleX(1.09);">Micropieux</div>
<div class="t m" style="top:1070px;font-size:22.2px;line-height:22.2px;font-weight:400;color:#1f3561;letter-spacing:0.35px;left:614.17px;width:2000px;text-align:center;transform:scaleX(1.09);">Diamètre</div>
<div class="t m" style="top:1070px;font-size:22.2px;line-height:22.2px;font-weight:400;color:#1f3561;letter-spacing:0.2px;left:812.10px;width:2000px;text-align:center;transform:scaleX(1.09);">Niveau platine</div>
<div class="t m" style="top:1070px;font-size:22.2px;line-height:22.2px;font-weight:400;color:#1f3561;letter-spacing:-0.52px;left:1009.74px;width:2000px;text-align:center;transform:scaleX(1.09);">PF Forage</div>
<div class="t m" style="top:1107px;font-size:22.2px;line-height:22.2px;font-weight:400;color:#1f3561;letter-spacing:-0.55px;left:1207.22px;width:2000px;text-align:center;transform:scaleX(1.09);">Essais réalisés</div>
<div class="t m" style="top:1115px;font-size:22.2px;line-height:22.2px;font-weight:400;color:#1f3561;letter-spacing:-0.34px;left:1404.83px;width:2000px;text-align:center;transform:scaleX(1.09);">Référence</div>
<div class="t m" style="top:1141px;font-size:22.2px;line-height:22.2px;font-weight:400;color:#1f3561;letter-spacing:0.31px;left:1405.15px;width:2000px;text-align:center;transform:scaleX(1.09);">standard</div>
<div class="t m" style="top:1092px;font-size:22.2px;line-height:22.2px;font-weight:400;color:#1f3561;letter-spacing:-0.12px;left:1602.94px;width:2000px;text-align:center;transform:scaleX(1.09);">DN Ext</div>
<div class="t m" style="top:1092px;font-size:22.2px;line-height:22.2px;font-weight:400;color:#1f3561;letter-spacing:-1.06px;left:1800.47px;width:2000px;text-align:center;transform:scaleX(1.09);">Ep.</div>
<div class="t m" style="top:1092px;font-size:22.2px;line-height:22.2px;font-weight:400;color:#1f3561;letter-spacing:0.88px;left:1998.94px;width:2000px;text-align:center;transform:scaleX(1.09);">DN Int</div>
<div class="t m" style="top:1092px;font-size:22.2px;line-height:22.2px;font-weight:400;color:#1f3561;letter-spacing:-0.31px;left:2196.34px;width:2000px;text-align:center;transform:scaleX(1.09);">DN Ext Manchon</div>
<div class="t m" style="top:1092px;font-size:22.2px;line-height:22.2px;font-weight:400;color:#1f3561;letter-spacing:0.3px;left:3315.70px;transform:scaleX(1.09);transform-origin:0 50%;">rés</div>
<div class="t m" style="top:994px;font-size:22.2px;line-height:22.2px;font-weight:400;color:#1f3561;letter-spacing:-0.06px;left:1899.47px;width:2000px;text-align:center;transform:scaleX(1.09);">Tube Armature Principal</div>
<div class="t m" style="top:1206px;font-size:22.2px;line-height:22.2px;font-weight:400;color:#1f3561;letter-spacing:0.63px;left:614.32px;width:2000px;text-align:center;transform:scaleX(1.09);">(mm)</div>
<div class="t m" style="top:1206px;font-size:22.2px;line-height:22.2px;font-weight:400;color:#1f3561;letter-spacing:0.29px;left:812.14px;width:2000px;text-align:center;transform:scaleX(1.09);">(m)</div>
<div class="t m" style="top:1206px;font-size:22.2px;line-height:22.2px;font-weight:400;color:#1f3561;letter-spacing:0.29px;left:1010.14px;width:2000px;text-align:center;transform:scaleX(1.09);">(m)</div>
<div class="t m" style="top:1206px;font-size:22.2px;line-height:22.2px;font-weight:400;color:#1f3561;letter-spacing:0.63px;left:1603.32px;width:2000px;text-align:center;transform:scaleX(1.09);">(mm)</div>
<div class="t m" style="top:1206px;font-size:22.2px;line-height:22.2px;font-weight:400;color:#1f3561;letter-spacing:0.63px;left:1801.32px;width:2000px;text-align:center;transform:scaleX(1.09);">(mm)</div>
<div class="t m" style="top:1206px;font-size:22.2px;line-height:22.2px;font-weight:400;color:#1f3561;letter-spacing:0.63px;left:1998.82px;width:2000px;text-align:center;transform:scaleX(1.09);">(mm)</div>
<div class="t m" style="top:1206px;font-size:22.2px;line-height:22.2px;font-weight:400;color:#1f3561;letter-spacing:0.63px;left:2196.82px;width:2000px;text-align:center;transform:scaleX(1.09);">(mm)</div>
<div class="b " style="left:803.70px;top:1187.80px;width:52.60px;height:52.60px;background:#2f9291;border-radius:50%;"></div>
<svg class="b" style="left:817.00px;top:1201.10px;" width="26" height="26" viewBox="0 0 26 26"><path d="M13 1.6 V24.4 M1.6 13 H24.4" stroke="#fff" stroke-width="3.4" stroke-linecap="round"/></svg>
<svg class="b" style="left:783.50px;top:1275.70px;" width="15" height="25" viewBox="0 0 15 25"><g fill="#4b4b57"><circle cx="3.5" cy="3.5" r="2.35"/><circle cx="3.5" cy="12.5" r="2.35"/><circle cx="3.5" cy="21.5" r="2.35"/><circle cx="11.2" cy="3.5" r="2.35"/><circle cx="11.2" cy="12.5" r="2.35"/><circle cx="11.2" cy="21.5" r="2.35"/></g></svg>
<svg class="b" style="left:830.30px;top:1273.60px;" width="30.2" height="30.2" viewBox="0 0 24 24"><g fill="none" stroke="#2f9291" stroke-width="2" stroke-linecap="round" stroke-linejoin="round"><rect x="8" y="8" width="14" height="14" rx="2.5"/><path d="M4 16c-1.1 0-2-.9-2-2V4c0-1.1.9-2 2-2h10c1.1 0 2 .9 2 2"/></g></svg>
<svg class="b" style="left:882.90px;top:1272.90px;" width="30.6" height="30.6" viewBox="0 0 24 24"><g fill="none" stroke="#2f9291" stroke-width="2" stroke-linecap="round" stroke-linejoin="round"><path d="M3 6h18"/><path d="M19 6v14c0 1-1 2-2 2H7c-1 0-2-1-2-2V6"/><path d="M8 6V4c0-1 1-2 2-2h4c1 0 2 1 2 2v2"/><path d="M10 11v6M14 11v6"/></g></svg>
<div class="t m" style="top:1277px;font-size:22.5px;line-height:22.5px;font-weight:400;color:#12323b;letter-spacing:0.35px;left:21.07px;width:2000px;text-align:center;transform:scaleX(1.09);">Impact</div>
<div class="t m" style="top:1277px;font-size:22px;line-height:22px;font-weight:400;color:#12323b;letter-spacing:0.1px;left:218.55px;width:2000px;text-align:center;transform:scaleX(1.04);">4</div>
<div class="t m" style="top:1277px;font-size:22px;line-height:22px;font-weight:400;color:#12323b;letter-spacing:0.1px;left:416.05px;width:2000px;text-align:center;transform:scaleX(1.04);">4</div>
<div class="t m" style="top:1277px;font-size:22px;line-height:22px;font-weight:400;color:#12323b;letter-spacing:0.1px;left:614.05px;width:2000px;text-align:center;transform:scaleX(1.04);">300</div>
<div class="t m" style="top:1277px;font-size:22px;line-height:22px;font-weight:400;color:#12323b;letter-spacing:0.1px;left:812.05px;width:2000px;text-align:center;transform:scaleX(1.04);">41.7</div>
<div class="t m" style="top:1277px;font-size:22px;line-height:22px;font-weight:400;color:#12323b;letter-spacing:0.1px;left:1010.05px;width:2000px;text-align:center;transform:scaleX(1.04);">22.2</div>
<div class="b " style="left:2186.00px;top:1266.00px;width:43.00px;height:43.00px;background:#fff;border-radius:11px;box-shadow:0 2px 4px rgba(60,60,80,0.25);"></div>
<div class="b " style="left:2374.00px;top:1265.80px;width:62.30px;height:43.20px;background:#dcfce7;border:2px solid #c3f3d3;border-radius:17px;"></div>
<div class="t m" style="top:1278px;font-size:21.5px;line-height:21.5px;font-weight:400;color:#14532d;letter-spacing:0.3px;left:1405.15px;width:2000px;text-align:center;transform:scaleX(1.06);">Oui</div>
<div class="t m" style="top:1277px;font-size:22px;line-height:22px;font-weight:400;color:#12323b;letter-spacing:0.1px;left:1603.05px;width:2000px;text-align:center;transform:scaleX(1.04);">73.0</div>
<div class="t m" style="top:1277px;font-size:22px;line-height:22px;font-weight:400;color:#12323b;letter-spacing:0.1px;left:1801.05px;width:2000px;text-align:center;transform:scaleX(1.04);">5.5</div>
<div class="t m" style="top:1277px;font-size:22px;line-height:22px;font-weight:400;color:#1f3561;letter-spacing:0.1px;left:1998.55px;width:2000px;text-align:center;transform:scaleX(1.04);">62</div>
<div class="t m" style="top:1277px;font-size:22px;line-height:22px;font-weight:400;color:#12323b;letter-spacing:0.1px;left:2196.55px;width:2000px;text-align:center;transform:scaleX(1.04);">0</div>
<svg class="b" style="left:783.50px;top:1347.83px;" width="15" height="25" viewBox="0 0 15 25"><g fill="#4b4b57"><circle cx="3.5" cy="3.5" r="2.35"/><circle cx="3.5" cy="12.5" r="2.35"/><circle cx="3.5" cy="21.5" r="2.35"/><circle cx="11.2" cy="3.5" r="2.35"/><circle cx="11.2" cy="12.5" r="2.35"/><circle cx="11.2" cy="21.5" r="2.35"/></g></svg>
<svg class="b" style="left:830.30px;top:1345.73px;" width="30.2" height="30.2" viewBox="0 0 24 24"><g fill="none" stroke="#2f9291" stroke-width="2" stroke-linecap="round" stroke-linejoin="round"><rect x="8" y="8" width="14" height="14" rx="2.5"/><path d="M4 16c-1.1 0-2-.9-2-2V4c0-1.1.9-2 2-2h10c1.1 0 2 .9 2 2"/></g></svg>
<svg class="b" style="left:882.90px;top:1345.03px;" width="30.6" height="30.6" viewBox="0 0 24 24"><g fill="none" stroke="#2f9291" stroke-width="2" stroke-linecap="round" stroke-linejoin="round"><path d="M3 6h18"/><path d="M19 6v14c0 1-1 2-2 2H7c-1 0-2-1-2-2V6"/><path d="M8 6V4c0-1 1-2 2-2h4c1 0 2 1 2 2v2"/><path d="M10 11v6M14 11v6"/></g></svg>
<div class="t m" style="top:1349px;font-size:22.5px;line-height:22.5px;font-weight:400;color:#12323b;letter-spacing:0.35px;left:21.07px;width:2000px;text-align:center;transform:scaleX(1.09);">Impact 2</div>
<div class="t m" style="top:1349px;font-size:22px;line-height:22px;font-weight:400;color:#12323b;letter-spacing:0.1px;left:218.55px;width:2000px;text-align:center;transform:scaleX(1.04);">2</div>
<div class="t m" style="top:1349px;font-size:22px;line-height:22px;font-weight:400;color:#12323b;letter-spacing:0.1px;left:416.05px;width:2000px;text-align:center;transform:scaleX(1.04);">4</div>
<div class="t m" style="top:1349px;font-size:22px;line-height:22px;font-weight:400;color:#12323b;letter-spacing:0.1px;left:614.05px;width:2000px;text-align:center;transform:scaleX(1.04);">250</div>
<div class="t m" style="top:1349px;font-size:22px;line-height:22px;font-weight:400;color:#12323b;letter-spacing:0.1px;left:812.05px;width:2000px;text-align:center;transform:scaleX(1.04);">21.7</div>
<div class="t m" style="top:1349px;font-size:22px;line-height:22px;font-weight:400;color:#12323b;letter-spacing:0.1px;left:1010.05px;width:2000px;text-align:center;transform:scaleX(1.04);">22.2</div>
<div class="b " style="left:2186.00px;top:1338.13px;width:43.00px;height:43.00px;background:#2f9291;border-radius:11px;box-shadow:0 3px 6px rgba(47,146,145,0.35);"></div>
<svg class="b" style="left:2186.00px;top:1338.13px;" width="43" height="43" viewBox="0 0 43 43"><path d="M9 22.2 L17.4 29.2 L32.6 12.4" fill="none" stroke="#fff" stroke-width="3.3" stroke-linecap="round" stroke-linejoin="round"/></svg>
<div class="b " style="left:2374.00px;top:1337.93px;width:62.30px;height:43.20px;background:#dcfce7;border:2px solid #c3f3d3;border-radius:17px;"></div>
<div class="t m" style="top:1350px;font-size:21.5px;line-height:21.5px;font-weight:400;color:#14532d;letter-spacing:0.3px;left:1405.15px;width:2000px;text-align:center;transform:scaleX(1.06);">Oui</div>
<div class="t m" style="top:1349px;font-size:22px;line-height:22px;font-weight:400;color:#12323b;letter-spacing:0.1px;left:1603.05px;width:2000px;text-align:center;transform:scaleX(1.04);">73.0</div>
<div class="t m" style="top:1349px;font-size:22px;line-height:22px;font-weight:400;color:#12323b;letter-spacing:0.1px;left:1801.05px;width:2000px;text-align:center;transform:scaleX(1.04);">5.5</div>
<div class="t m" style="top:1349px;font-size:22px;line-height:22px;font-weight:400;color:#1f3561;letter-spacing:0.1px;left:1998.55px;width:2000px;text-align:center;transform:scaleX(1.04);">62</div>
<div class="t m" style="top:1349px;font-size:22px;line-height:22px;font-weight:400;color:#12323b;letter-spacing:0.1px;left:2196.55px;width:2000px;text-align:center;transform:scaleX(1.04);">0</div>
<svg class="b" style="left:783.50px;top:1419.96px;" width="15" height="25" viewBox="0 0 15 25"><g fill="#4b4b57"><circle cx="3.5" cy="3.5" r="2.35"/><circle cx="3.5" cy="12.5" r="2.35"/><circle cx="3.5" cy="21.5" r="2.35"/><circle cx="11.2" cy="3.5" r="2.35"/><circle cx="11.2" cy="12.5" r="2.35"/><circle cx="11.2" cy="21.5" r="2.35"/></g></svg>
<svg class="b" style="left:830.30px;top:1417.86px;" width="30.2" height="30.2" viewBox="0 0 24 24"><g fill="none" stroke="#2f9291" stroke-width="2" stroke-linecap="round" stroke-linejoin="round"><rect x="8" y="8" width="14" height="14" rx="2.5"/><path d="M4 16c-1.1 0-2-.9-2-2V4c0-1.1.9-2 2-2h10c1.1 0 2 .9 2 2"/></g></svg>
<svg class="b" style="left:882.90px;top:1417.16px;" width="30.6" height="30.6" viewBox="0 0 24 24"><g fill="none" stroke="#2f9291" stroke-width="2" stroke-linecap="round" stroke-linejoin="round"><path d="M3 6h18"/><path d="M19 6v14c0 1-1 2-2 2H7c-1 0-2-1-2-2V6"/><path d="M8 6V4c0-1 1-2 2-2h4c1 0 2 1 2 2v2"/><path d="M10 11v6M14 11v6"/></g></svg>
<div class="t m" style="top:1422px;font-size:22.5px;line-height:22.5px;font-weight:400;color:#12323b;letter-spacing:0.35px;left:21.07px;width:2000px;text-align:center;transform:scaleX(1.09);">Impact 3</div>
<div class="t m" style="top:1422px;font-size:22px;line-height:22px;font-weight:400;color:#12323b;letter-spacing:0.1px;left:218.55px;width:2000px;text-align:center;transform:scaleX(1.04);">2</div>
<div class="t m" style="top:1422px;font-size:22px;line-height:22px;font-weight:400;color:#12323b;letter-spacing:0.1px;left:416.05px;width:2000px;text-align:center;transform:scaleX(1.04);">4</div>
<div class="t m" style="top:1422px;font-size:22px;line-height:22px;font-weight:400;color:#12323b;letter-spacing:0.1px;left:614.05px;width:2000px;text-align:center;transform:scaleX(1.04);">180</div>
<div class="t m" style="top:1422px;font-size:22px;line-height:22px;font-weight:400;color:#12323b;letter-spacing:0.1px;left:812.05px;width:2000px;text-align:center;transform:scaleX(1.04);">16.4</div>
<div class="t m" style="top:1422px;font-size:22px;line-height:22px;font-weight:400;color:#12323b;letter-spacing:0.1px;left:1010.05px;width:2000px;text-align:center;transform:scaleX(1.04);">22.2</div>
<div class="b " style="left:2186.00px;top:1410.26px;width:43.00px;height:43.00px;background:#fff;border-radius:11px;box-shadow:0 2px 4px rgba(60,60,80,0.25);"></div>
<div class="b " style="left:2374.00px;top:1410.06px;width:62.30px;height:43.20px;background:#dcfce7;border:2px solid #c3f3d3;border-radius:17px;"></div>
<div class="t m" style="top:1422px;font-size:21.5px;line-height:21.5px;font-weight:400;color:#14532d;letter-spacing:0.3px;left:1405.15px;width:2000px;text-align:center;transform:scaleX(1.06);">Oui</div>
<div class="t m" style="top:1422px;font-size:22px;line-height:22px;font-weight:400;color:#12323b;letter-spacing:0.1px;left:1603.05px;width:2000px;text-align:center;transform:scaleX(1.04);">73.0</div>
<div class="t m" style="top:1422px;font-size:22px;line-height:22px;font-weight:400;color:#12323b;letter-spacing:0.1px;left:1801.05px;width:2000px;text-align:center;transform:scaleX(1.04);">5.5</div>
<div class="t m" style="top:1422px;font-size:22px;line-height:22px;font-weight:400;color:#1f3561;letter-spacing:0.1px;left:1998.55px;width:2000px;text-align:center;transform:scaleX(1.04);">62</div>
<div class="t m" style="top:1422px;font-size:22px;line-height:22px;font-weight:400;color:#12323b;letter-spacing:0.1px;left:2196.55px;width:2000px;text-align:center;transform:scaleX(1.04);">0</div>
<svg class="b" style="left:783.50px;top:1492.09px;" width="15" height="25" viewBox="0 0 15 25"><g fill="#4b4b57"><circle cx="3.5" cy="3.5" r="2.35"/><circle cx="3.5" cy="12.5" r="2.35"/><circle cx="3.5" cy="21.5" r="2.35"/><circle cx="11.2" cy="3.5" r="2.35"/><circle cx="11.2" cy="12.5" r="2.35"/><circle cx="11.2" cy="21.5" r="2.35"/></g></svg>
<svg class="b" style="left:830.30px;top:1489.99px;" width="30.2" height="30.2" viewBox="0 0 24 24"><g fill="none" stroke="#2f9291" stroke-width="2" stroke-linecap="round" stroke-linejoin="round"><rect x="8" y="8" width="14" height="14" rx="2.5"/><path d="M4 16c-1.1 0-2-.9-2-2V4c0-1.1.9-2 2-2h10c1.1 0 2 .9 2 2"/></g></svg>
<svg class="b" style="left:882.90px;top:1489.29px;" width="30.6" height="30.6" viewBox="0 0 24 24"><g fill="none" stroke="#2f9291" stroke-width="2" stroke-linecap="round" stroke-linejoin="round"><path d="M3 6h18"/><path d="M19 6v14c0 1-1 2-2 2H7c-1 0-2-1-2-2V6"/><path d="M8 6V4c0-1 1-2 2-2h4c1 0 2 1 2 2v2"/><path d="M10 11v6M14 11v6"/></g></svg>
<div class="t m" style="top:1494px;font-size:22.5px;line-height:22.5px;font-weight:400;color:#12323b;letter-spacing:0.35px;left:21.07px;width:2000px;text-align:center;transform:scaleX(1.09);">Impact 4</div>
<div class="t m" style="top:1494px;font-size:22px;line-height:22px;font-weight:400;color:#12323b;letter-spacing:0.1px;left:218.55px;width:2000px;text-align:center;transform:scaleX(1.04);">4</div>
<div class="t m" style="top:1494px;font-size:22px;line-height:22px;font-weight:400;color:#12323b;letter-spacing:0.1px;left:416.05px;width:2000px;text-align:center;transform:scaleX(1.04);">10</div>
<div class="t m" style="top:1494px;font-size:22px;line-height:22px;font-weight:400;color:#12323b;letter-spacing:0.1px;left:614.05px;width:2000px;text-align:center;transform:scaleX(1.04);">250</div>
<div class="t m" style="top:1494px;font-size:22px;line-height:22px;font-weight:400;color:#12323b;letter-spacing:0.1px;left:812.05px;width:2000px;text-align:center;transform:scaleX(1.04);">21.7</div>
<div class="t m" style="top:1494px;font-size:22px;line-height:22px;font-weight:400;color:#12323b;letter-spacing:0.1px;left:1010.05px;width:2000px;text-align:center;transform:scaleX(1.04);">22.2</div>
<div class="b " style="left:2186.00px;top:1482.39px;width:43.00px;height:43.00px;background:#2f9291;border-radius:11px;box-shadow:0 3px 6px rgba(47,146,145,0.35);"></div>
<svg class="b" style="left:2186.00px;top:1482.39px;" width="43" height="43" viewBox="0 0 43 43"><path d="M9 22.2 L17.4 29.2 L32.6 12.4" fill="none" stroke="#fff" stroke-width="3.3" stroke-linecap="round" stroke-linejoin="round"/></svg>
<div class="b " style="left:2374.00px;top:1482.19px;width:62.30px;height:43.20px;background:#dcfce7;border:2px solid #c3f3d3;border-radius:17px;"></div>
<div class="t m" style="top:1494px;font-size:21.5px;line-height:21.5px;font-weight:400;color:#14532d;letter-spacing:0.3px;left:1405.15px;width:2000px;text-align:center;transform:scaleX(1.06);">Oui</div>
<div class="t m" style="top:1494px;font-size:22px;line-height:22px;font-weight:400;color:#12323b;letter-spacing:0.1px;left:1603.05px;width:2000px;text-align:center;transform:scaleX(1.04);">73.0</div>
<div class="t m" style="top:1494px;font-size:22px;line-height:22px;font-weight:400;color:#12323b;letter-spacing:0.1px;left:1801.05px;width:2000px;text-align:center;transform:scaleX(1.04);">5.5</div>
<div class="t m" style="top:1494px;font-size:22px;line-height:22px;font-weight:400;color:#1f3561;letter-spacing:0.1px;left:1998.55px;width:2000px;text-align:center;transform:scaleX(1.04);">62</div>
<div class="t m" style="top:1494px;font-size:22px;line-height:22px;font-weight:400;color:#12323b;letter-spacing:0.1px;left:2196.55px;width:2000px;text-align:center;transform:scaleX(1.04);">0</div>
<svg class="b" style="left:783.50px;top:1564.22px;" width="15" height="25" viewBox="0 0 15 25"><g fill="#4b4b57"><circle cx="3.5" cy="3.5" r="2.35"/><circle cx="3.5" cy="12.5" r="2.35"/><circle cx="3.5" cy="21.5" r="2.35"/><circle cx="11.2" cy="3.5" r="2.35"/><circle cx="11.2" cy="12.5" r="2.35"/><circle cx="11.2" cy="21.5" r="2.35"/></g></svg>
<svg class="b" style="left:830.30px;top:1562.12px;" width="30.2" height="30.2" viewBox="0 0 24 24"><g fill="none" stroke="#2f9291" stroke-width="2" stroke-linecap="round" stroke-linejoin="round"><rect x="8" y="8" width="14" height="14" rx="2.5"/><path d="M4 16c-1.1 0-2-.9-2-2V4c0-1.1.9-2 2-2h10c1.1 0 2 .9 2 2"/></g></svg>
<svg class="b" style="left:882.90px;top:1561.42px;" width="30.6" height="30.6" viewBox="0 0 24 24"><g fill="none" stroke="#2f9291" stroke-width="2" stroke-linecap="round" stroke-linejoin="round"><path d="M3 6h18"/><path d="M19 6v14c0 1-1 2-2 2H7c-1 0-2-1-2-2V6"/><path d="M8 6V4c0-1 1-2 2-2h4c1 0 2 1 2 2v2"/><path d="M10 11v6M14 11v6"/></g></svg>
<div class="t m" style="top:1566px;font-size:22.5px;line-height:22.5px;font-weight:400;color:#12323b;letter-spacing:0.35px;left:21.07px;width:2000px;text-align:center;transform:scaleX(1.09);">Impact 5</div>
<div class="t m" style="top:1566px;font-size:22px;line-height:22px;font-weight:400;color:#12323b;letter-spacing:0.1px;left:218.55px;width:2000px;text-align:center;transform:scaleX(1.04);">2</div>
<div class="t m" style="top:1566px;font-size:22px;line-height:22px;font-weight:400;color:#12323b;letter-spacing:0.1px;left:416.05px;width:2000px;text-align:center;transform:scaleX(1.04);">4</div>
<div class="t m" style="top:1566px;font-size:22px;line-height:22px;font-weight:400;color:#12323b;letter-spacing:0.1px;left:614.05px;width:2000px;text-align:center;transform:scaleX(1.04);">250</div>
<div class="t m" style="top:1566px;font-size:22px;line-height:22px;font-weight:400;color:#12323b;letter-spacing:0.1px;left:812.05px;width:2000px;text-align:center;transform:scaleX(1.04);">24.4</div>
<div class="t m" style="top:1566px;font-size:22px;line-height:22px;font-weight:400;color:#12323b;letter-spacing:0.1px;left:1010.05px;width:2000px;text-align:center;transform:scaleX(1.04);">22.2</div>
<div class="b " style="left:2186.00px;top:1554.52px;width:43.00px;height:43.00px;background:#fff;border-radius:11px;box-shadow:0 2px 4px rgba(60,60,80,0.25);"></div>
<div class="b " style="left:2374.00px;top:1554.32px;width:62.30px;height:43.20px;background:#dcfce7;border:2px solid #c3f3d3;border-radius:17px;"></div>
<div class="t m" style="top:1566px;font-size:21.5px;line-height:21.5px;font-weight:400;color:#14532d;letter-spacing:0.3px;left:1405.15px;width:2000px;text-align:center;transform:scaleX(1.06);">Oui</div>
<div class="t m" style="top:1566px;font-size:22px;line-height:22px;font-weight:400;color:#12323b;letter-spacing:0.1px;left:1603.05px;width:2000px;text-align:center;transform:scaleX(1.04);">73.0</div>
<div class="t m" style="top:1566px;font-size:22px;line-height:22px;font-weight:400;color:#12323b;letter-spacing:0.1px;left:1801.05px;width:2000px;text-align:center;transform:scaleX(1.04);">5.5</div>
<div class="t m" style="top:1566px;font-size:22px;line-height:22px;font-weight:400;color:#1f3561;letter-spacing:0.1px;left:1998.55px;width:2000px;text-align:center;transform:scaleX(1.04);">62</div>
<div class="t m" style="top:1566px;font-size:22px;line-height:22px;font-weight:400;color:#12323b;letter-spacing:0.1px;left:2196.55px;width:2000px;text-align:center;transform:scaleX(1.04);">0</div>
<svg class="b" style="left:783.50px;top:1636.35px;" width="15" height="25" viewBox="0 0 15 25"><g fill="#4b4b57"><circle cx="3.5" cy="3.5" r="2.35"/><circle cx="3.5" cy="12.5" r="2.35"/><circle cx="3.5" cy="21.5" r="2.35"/><circle cx="11.2" cy="3.5" r="2.35"/><circle cx="11.2" cy="12.5" r="2.35"/><circle cx="11.2" cy="21.5" r="2.35"/></g></svg>
<svg class="b" style="left:830.30px;top:1634.25px;" width="30.2" height="30.2" viewBox="0 0 24 24"><g fill="none" stroke="#2f9291" stroke-width="2" stroke-linecap="round" stroke-linejoin="round"><rect x="8" y="8" width="14" height="14" rx="2.5"/><path d="M4 16c-1.1 0-2-.9-2-2V4c0-1.1.9-2 2-2h10c1.1 0 2 .9 2 2"/></g></svg>
<svg class="b" style="left:882.90px;top:1633.55px;" width="30.6" height="30.6" viewBox="0 0 24 24"><g fill="none" stroke="#2f9291" stroke-width="2" stroke-linecap="round" stroke-linejoin="round"><path d="M3 6h18"/><path d="M19 6v14c0 1-1 2-2 2H7c-1 0-2-1-2-2V6"/><path d="M8 6V4c0-1 1-2 2-2h4c1 0 2 1 2 2v2"/><path d="M10 11v6M14 11v6"/></g></svg>
<div class="t m" style="top:1638px;font-size:22.5px;line-height:22.5px;font-weight:400;color:#12323b;letter-spacing:0.35px;left:21.07px;width:2000px;text-align:center;transform:scaleX(1.09);">Impact 6</div>
<div class="t m" style="top:1638px;font-size:22px;line-height:22px;font-weight:400;color:#12323b;letter-spacing:0.1px;left:218.55px;width:2000px;text-align:center;transform:scaleX(1.04);">8</div>
<div class="t m" style="top:1638px;font-size:22px;line-height:22px;font-weight:400;color:#12323b;letter-spacing:0.1px;left:416.05px;width:2000px;text-align:center;transform:scaleX(1.04);">4</div>
<div class="t m" style="top:1638px;font-size:22px;line-height:22px;font-weight:400;color:#12323b;letter-spacing:0.1px;left:614.05px;width:2000px;text-align:center;transform:scaleX(1.04);">250</div>
<div class="t m" style="top:1638px;font-size:22px;line-height:22px;font-weight:400;color:#12323b;letter-spacing:0.1px;left:812.05px;width:2000px;text-align:center;transform:scaleX(1.04);">18</div>
<div class="t m" style="top:1638px;font-size:22px;line-height:22px;font-weight:400;color:#12323b;letter-spacing:0.1px;left:1010.05px;width:2000px;text-align:center;transform:scaleX(1.04);">22.2</div>
<div class="b " style="left:2186.00px;top:1626.65px;width:43.00px;height:43.00px;background:#fff;border-radius:11px;box-shadow:0 2px 4px rgba(60,60,80,0.25);"></div>
<div class="b " style="left:2374.00px;top:1626.45px;width:62.30px;height:43.20px;background:#dcfce7;border:2px solid #c3f3d3;border-radius:17px;"></div>
<div class="t m" style="top:1639px;font-size:21.5px;line-height:21.5px;font-weight:400;color:#14532d;letter-spacing:0.3px;left:1405.15px;width:2000px;text-align:center;transform:scaleX(1.06);">Oui</div>
<div class="t m" style="top:1638px;font-size:22px;line-height:22px;font-weight:400;color:#12323b;letter-spacing:0.1px;left:1603.05px;width:2000px;text-align:center;transform:scaleX(1.04);">73.0</div>
<div class="t m" style="top:1638px;font-size:22px;line-height:22px;font-weight:400;color:#12323b;letter-spacing:0.1px;left:1801.05px;width:2000px;text-align:center;transform:scaleX(1.04);">5.5</div>
<div class="t m" style="top:1638px;font-size:22px;line-height:22px;font-weight:400;color:#1f3561;letter-spacing:0.1px;left:1998.55px;width:2000px;text-align:center;transform:scaleX(1.04);">62</div>
<div class="t m" style="top:1638px;font-size:22px;line-height:22px;font-weight:400;color:#12323b;letter-spacing:0.1px;left:2196.55px;width:2000px;text-align:center;transform:scaleX(1.04);">0</div>
<svg class="b" style="left:783.50px;top:1708.48px;" width="15" height="25" viewBox="0 0 15 25"><g fill="#4b4b57"><circle cx="3.5" cy="3.5" r="2.35"/><circle cx="3.5" cy="12.5" r="2.35"/><circle cx="3.5" cy="21.5" r="2.35"/><circle cx="11.2" cy="3.5" r="2.35"/><circle cx="11.2" cy="12.5" r="2.35"/><circle cx="11.2" cy="21.5" r="2.35"/></g></svg>
<svg class="b" style="left:830.30px;top:1706.38px;" width="30.2" height="30.2" viewBox="0 0 24 24"><g fill="none" stroke="#2f9291" stroke-width="2" stroke-linecap="round" stroke-linejoin="round"><rect x="8" y="8" width="14" height="14" rx="2.5"/><path d="M4 16c-1.1 0-2-.9-2-2V4c0-1.1.9-2 2-2h10c1.1 0 2 .9 2 2"/></g></svg>
<svg class="b" style="left:882.90px;top:1705.68px;" width="30.6" height="30.6" viewBox="0 0 24 24"><g fill="none" stroke="#2f9291" stroke-width="2" stroke-linecap="round" stroke-linejoin="round"><path d="M3 6h18"/><path d="M19 6v14c0 1-1 2-2 2H7c-1 0-2-1-2-2V6"/><path d="M8 6V4c0-1 1-2 2-2h4c1 0 2 1 2 2v2"/><path d="M10 11v6M14 11v6"/></g></svg>
<div class="t m" style="top:1710px;font-size:22.5px;line-height:22.5px;font-weight:400;color:#12323b;letter-spacing:0.35px;left:21.07px;width:2000px;text-align:center;transform:scaleX(1.09);">Impact 7</div>
<div class="t m" style="top:1710px;font-size:22px;line-height:22px;font-weight:400;color:#12323b;letter-spacing:0.1px;left:218.55px;width:2000px;text-align:center;transform:scaleX(1.04);">2</div>
<div class="t m" style="top:1710px;font-size:22px;line-height:22px;font-weight:400;color:#12323b;letter-spacing:0.1px;left:416.05px;width:2000px;text-align:center;transform:scaleX(1.04);">4</div>
<div class="t m" style="top:1710px;font-size:22px;line-height:22px;font-weight:400;color:#12323b;letter-spacing:0.1px;left:614.05px;width:2000px;text-align:center;transform:scaleX(1.04);">250</div>
<div class="t m" style="top:1710px;font-size:22px;line-height:22px;font-weight:400;color:#12323b;letter-spacing:0.1px;left:812.05px;width:2000px;text-align:center;transform:scaleX(1.04);">21.7</div>
<div class="t m" style="top:1710px;font-size:22px;line-height:22px;font-weight:400;color:#12323b;letter-spacing:0.1px;left:1010.05px;width:2000px;text-align:center;transform:scaleX(1.04);">22.2</div>
<div class="b " style="left:2186.00px;top:1698.78px;width:43.00px;height:43.00px;background:#fff;border-radius:11px;box-shadow:0 2px 4px rgba(60,60,80,0.25);"></div>
<div class="b " style="left:2374.00px;top:1698.58px;width:62.30px;height:43.20px;background:#dcfce7;border:2px solid #c3f3d3;border-radius:17px;"></div>
<div class="t m" style="top:1711px;font-size:21.5px;line-height:21.5px;font-weight:400;color:#14532d;letter-spacing:0.3px;left:1405.15px;width:2000px;text-align:center;transform:scaleX(1.06);">Oui</div>
<div class="t m" style="top:1710px;font-size:22px;line-height:22px;font-weight:400;color:#12323b;letter-spacing:0.1px;left:1603.05px;width:2000px;text-align:center;transform:scaleX(1.04);">73.0</div>
<div class="t m" style="top:1710px;font-size:22px;line-height:22px;font-weight:400;color:#12323b;letter-spacing:0.1px;left:1801.05px;width:2000px;text-align:center;transform:scaleX(1.04);">5.5</div>
<div class="t m" style="top:1710px;font-size:22px;line-height:22px;font-weight:400;color:#1f3561;letter-spacing:0.1px;left:1998.55px;width:2000px;text-align:center;transform:scaleX(1.04);">62</div>
<div class="t m" style="top:1710px;font-size:22px;line-height:22px;font-weight:400;color:#12323b;letter-spacing:0.1px;left:2196.55px;width:2000px;text-align:center;transform:scaleX(1.04);">0</div>
<svg class="b" style="left:783.50px;top:1780.61px;" width="15" height="25" viewBox="0 0 15 25"><g fill="#4b4b57"><circle cx="3.5" cy="3.5" r="2.35"/><circle cx="3.5" cy="12.5" r="2.35"/><circle cx="3.5" cy="21.5" r="2.35"/><circle cx="11.2" cy="3.5" r="2.35"/><circle cx="11.2" cy="12.5" r="2.35"/><circle cx="11.2" cy="21.5" r="2.35"/></g></svg>
<svg class="b" style="left:830.30px;top:1778.51px;" width="30.2" height="30.2" viewBox="0 0 24 24"><g fill="none" stroke="#2f9291" stroke-width="2" stroke-linecap="round" stroke-linejoin="round"><rect x="8" y="8" width="14" height="14" rx="2.5"/><path d="M4 16c-1.1 0-2-.9-2-2V4c0-1.1.9-2 2-2h10c1.1 0 2 .9 2 2"/></g></svg>
<svg class="b" style="left:882.90px;top:1777.81px;" width="30.6" height="30.6" viewBox="0 0 24 24"><g fill="none" stroke="#2f9291" stroke-width="2" stroke-linecap="round" stroke-linejoin="round"><path d="M3 6h18"/><path d="M19 6v14c0 1-1 2-2 2H7c-1 0-2-1-2-2V6"/><path d="M8 6V4c0-1 1-2 2-2h4c1 0 2 1 2 2v2"/><path d="M10 11v6M14 11v6"/></g></svg>
<div class="t m" style="top:1782px;font-size:22.5px;line-height:22.5px;font-weight:400;color:#12323b;letter-spacing:0.35px;left:21.07px;width:2000px;text-align:center;transform:scaleX(1.09);">Impact 8</div>
<div class="t m" style="top:1782px;font-size:22px;line-height:22px;font-weight:400;color:#12323b;letter-spacing:0.1px;left:218.55px;width:2000px;text-align:center;transform:scaleX(1.04);">2</div>
<div class="t m" style="top:1782px;font-size:22px;line-height:22px;font-weight:400;color:#12323b;letter-spacing:0.1px;left:416.05px;width:2000px;text-align:center;transform:scaleX(1.04);">4</div>
<div class="t m" style="top:1782px;font-size:22px;line-height:22px;font-weight:400;color:#12323b;letter-spacing:0.1px;left:614.05px;width:2000px;text-align:center;transform:scaleX(1.04);">250</div>
<div class="t m" style="top:1782px;font-size:22px;line-height:22px;font-weight:400;color:#12323b;letter-spacing:0.1px;left:812.05px;width:2000px;text-align:center;transform:scaleX(1.04);">21.7</div>
<div class="t m" style="top:1782px;font-size:22px;line-height:22px;font-weight:400;color:#12323b;letter-spacing:0.1px;left:1010.05px;width:2000px;text-align:center;transform:scaleX(1.04);">22.2</div>
<div class="b " style="left:2186.00px;top:1770.91px;width:43.00px;height:43.00px;background:#2f9291;border-radius:11px;box-shadow:0 3px 6px rgba(47,146,145,0.35);"></div>
<svg class="b" style="left:2186.00px;top:1770.91px;" width="43" height="43" viewBox="0 0 43 43"><path d="M9 22.2 L17.4 29.2 L32.6 12.4" fill="none" stroke="#fff" stroke-width="3.3" stroke-linecap="round" stroke-linejoin="round"/></svg>
<div class="b " style="left:2374.00px;top:1770.71px;width:62.30px;height:43.20px;background:#dcfce7;border:2px solid #c3f3d3;border-radius:17px;"></div>
<div class="t m" style="top:1783px;font-size:21.5px;line-height:21.5px;font-weight:400;color:#14532d;letter-spacing:0.3px;left:1405.15px;width:2000px;text-align:center;transform:scaleX(1.06);">Oui</div>
<div class="t m" style="top:1782px;font-size:22px;line-height:22px;font-weight:400;color:#12323b;letter-spacing:0.1px;left:1603.05px;width:2000px;text-align:center;transform:scaleX(1.04);">73.0</div>
<div class="t m" style="top:1782px;font-size:22px;line-height:22px;font-weight:400;color:#12323b;letter-spacing:0.1px;left:1801.05px;width:2000px;text-align:center;transform:scaleX(1.04);">5.5</div>
<div class="t m" style="top:1782px;font-size:22px;line-height:22px;font-weight:400;color:#1f3561;letter-spacing:0.1px;left:1998.55px;width:2000px;text-align:center;transform:scaleX(1.04);">62</div>
<div class="t m" style="top:1782px;font-size:22px;line-height:22px;font-weight:400;color:#12323b;letter-spacing:0.1px;left:2196.55px;width:2000px;text-align:center;transform:scaleX(1.04);">0</div>
<svg class="b" style="left:783.50px;top:1852.74px;" width="15" height="25" viewBox="0 0 15 25"><g fill="#4b4b57"><circle cx="3.5" cy="3.5" r="2.35"/><circle cx="3.5" cy="12.5" r="2.35"/><circle cx="3.5" cy="21.5" r="2.35"/><circle cx="11.2" cy="3.5" r="2.35"/><circle cx="11.2" cy="12.5" r="2.35"/><circle cx="11.2" cy="21.5" r="2.35"/></g></svg>
<svg class="b" style="left:830.30px;top:1850.64px;" width="30.2" height="30.2" viewBox="0 0 24 24"><g fill="none" stroke="#2f9291" stroke-width="2" stroke-linecap="round" stroke-linejoin="round"><rect x="8" y="8" width="14" height="14" rx="2.5"/><path d="M4 16c-1.1 0-2-.9-2-2V4c0-1.1.9-2 2-2h10c1.1 0 2 .9 2 2"/></g></svg>
<svg class="b" style="left:882.90px;top:1849.94px;" width="30.6" height="30.6" viewBox="0 0 24 24"><g fill="none" stroke="#2f9291" stroke-width="2" stroke-linecap="round" stroke-linejoin="round"><path d="M3 6h18"/><path d="M19 6v14c0 1-1 2-2 2H7c-1 0-2-1-2-2V6"/><path d="M8 6V4c0-1 1-2 2-2h4c1 0 2 1 2 2v2"/><path d="M10 11v6M14 11v6"/></g></svg>
<div class="t m" style="top:1854px;font-size:22.5px;line-height:22.5px;font-weight:400;color:#12323b;letter-spacing:0.35px;left:21.07px;width:2000px;text-align:center;transform:scaleX(1.09);">Impact 9</div>
<div class="t m" style="top:1854px;font-size:22px;line-height:22px;font-weight:400;color:#12323b;letter-spacing:0.1px;left:218.55px;width:2000px;text-align:center;transform:scaleX(1.04);">6</div>
<div class="t m" style="top:1854px;font-size:22px;line-height:22px;font-weight:400;color:#12323b;letter-spacing:0.1px;left:416.05px;width:2000px;text-align:center;transform:scaleX(1.04);">12</div>
<div class="t m" style="top:1854px;font-size:22px;line-height:22px;font-weight:400;color:#12323b;letter-spacing:0.1px;left:614.05px;width:2000px;text-align:center;transform:scaleX(1.04);">250</div>
<div class="t m" style="top:1854px;font-size:22px;line-height:22px;font-weight:400;color:#12323b;letter-spacing:0.1px;left:812.05px;width:2000px;text-align:center;transform:scaleX(1.04);">30</div>
<div class="t m" style="top:1854px;font-size:22px;line-height:22px;font-weight:400;color:#12323b;letter-spacing:0.1px;left:1010.05px;width:2000px;text-align:center;transform:scaleX(1.04);">22.2</div>
<div class="b " style="left:2186.00px;top:1843.04px;width:43.00px;height:43.00px;background:#fff;border-radius:11px;box-shadow:0 2px 4px rgba(60,60,80,0.25);"></div>
<div class="b " style="left:2374.00px;top:1842.84px;width:62.30px;height:43.20px;background:#dcfce7;border:2px solid #c3f3d3;border-radius:17px;"></div>
<div class="t m" style="top:1855px;font-size:21.5px;line-height:21.5px;font-weight:400;color:#14532d;letter-spacing:0.3px;left:1405.15px;width:2000px;text-align:center;transform:scaleX(1.06);">Oui</div>
<div class="t m" style="top:1854px;font-size:22px;line-height:22px;font-weight:400;color:#12323b;letter-spacing:0.1px;left:1603.05px;width:2000px;text-align:center;transform:scaleX(1.04);">73.0</div>
<div class="t m" style="top:1854px;font-size:22px;line-height:22px;font-weight:400;color:#12323b;letter-spacing:0.1px;left:1801.05px;width:2000px;text-align:center;transform:scaleX(1.04);">5.5</div>
<div class="t m" style="top:1854px;font-size:22px;line-height:22px;font-weight:400;color:#1f3561;letter-spacing:0.1px;left:1998.55px;width:2000px;text-align:center;transform:scaleX(1.04);">62</div>
<div class="t m" style="top:1854px;font-size:22px;line-height:22px;font-weight:400;color:#12323b;letter-spacing:0.1px;left:2196.55px;width:2000px;text-align:center;transform:scaleX(1.04);">0</div>
<svg class="b" style="left:783.50px;top:1924.87px;" width="15" height="25" viewBox="0 0 15 25"><g fill="#4b4b57"><circle cx="3.5" cy="3.5" r="2.35"/><circle cx="3.5" cy="12.5" r="2.35"/><circle cx="3.5" cy="21.5" r="2.35"/><circle cx="11.2" cy="3.5" r="2.35"/><circle cx="11.2" cy="12.5" r="2.35"/><circle cx="11.2" cy="21.5" r="2.35"/></g></svg>
<svg class="b" style="left:830.30px;top:1922.77px;" width="30.2" height="30.2" viewBox="0 0 24 24"><g fill="none" stroke="#2f9291" stroke-width="2" stroke-linecap="round" stroke-linejoin="round"><rect x="8" y="8" width="14" height="14" rx="2.5"/><path d="M4 16c-1.1 0-2-.9-2-2V4c0-1.1.9-2 2-2h10c1.1 0 2 .9 2 2"/></g></svg>
<svg class="b" style="left:882.90px;top:1922.07px;" width="30.6" height="30.6" viewBox="0 0 24 24"><g fill="none" stroke="#2f9291" stroke-width="2" stroke-linecap="round" stroke-linejoin="round"><path d="M3 6h18"/><path d="M19 6v14c0 1-1 2-2 2H7c-1 0-2-1-2-2V6"/><path d="M8 6V4c0-1 1-2 2-2h4c1 0 2 1 2 2v2"/><path d="M10 11v6M14 11v6"/></g></svg>
<div class="t m" style="top:1926px;font-size:22.5px;line-height:22.5px;font-weight:400;color:#12323b;letter-spacing:0.35px;left:21.07px;width:2000px;text-align:center;transform:scaleX(1.09);">Impact 10</div>
<div class="t m" style="top:1926px;font-size:22px;line-height:22px;font-weight:400;color:#12323b;letter-spacing:0.1px;left:218.55px;width:2000px;text-align:center;transform:scaleX(1.04);">8</div>
<div class="t m" style="top:1926px;font-size:22px;line-height:22px;font-weight:400;color:#12323b;letter-spacing:0.1px;left:416.05px;width:2000px;text-align:center;transform:scaleX(1.04);">16</div>
<div class="t m" style="top:1926px;font-size:22px;line-height:22px;font-weight:400;color:#12323b;letter-spacing:0.1px;left:614.05px;width:2000px;text-align:center;transform:scaleX(1.04);">250</div>
<div class="t m" style="top:1926px;font-size:22px;line-height:22px;font-weight:400;color:#12323b;letter-spacing:0.1px;left:812.05px;width:2000px;text-align:center;transform:scaleX(1.04);">21.7</div>
<div class="t m" style="top:1926px;font-size:22px;line-height:22px;font-weight:400;color:#12323b;letter-spacing:0.1px;left:1010.05px;width:2000px;text-align:center;transform:scaleX(1.04);">22.2</div>
<div class="b " style="left:2186.00px;top:1915.17px;width:43.00px;height:43.00px;background:#fff;border-radius:11px;box-shadow:0 2px 4px rgba(60,60,80,0.25);"></div>
<div class="b " style="left:2374.00px;top:1914.97px;width:62.30px;height:43.20px;background:#dcfce7;border:2px solid #c3f3d3;border-radius:17px;"></div>
<div class="t m" style="top:1927px;font-size:21.5px;line-height:21.5px;font-weight:400;color:#14532d;letter-spacing:0.3px;left:1405.15px;width:2000px;text-align:center;transform:scaleX(1.06);">Oui</div>
<div class="t m" style="top:1926px;font-size:22px;line-height:22px;font-weight:400;color:#12323b;letter-spacing:0.1px;left:1603.05px;width:2000px;text-align:center;transform:scaleX(1.04);">73.0</div>
<div class="t m" style="top:1926px;font-size:22px;line-height:22px;font-weight:400;color:#12323b;letter-spacing:0.1px;left:1801.05px;width:2000px;text-align:center;transform:scaleX(1.04);">5.5</div>
<div class="t m" style="top:1926px;font-size:22px;line-height:22px;font-weight:400;color:#1f3561;letter-spacing:0.1px;left:1998.55px;width:2000px;text-align:center;transform:scaleX(1.04);">62</div>
<div class="t m" style="top:1926px;font-size:22px;line-height:22px;font-weight:400;color:#12323b;letter-spacing:0.1px;left:2196.55px;width:2000px;text-align:center;transform:scaleX(1.04);">0</div>
<svg class="b" style="left:783.50px;top:1997.00px;" width="15" height="25" viewBox="0 0 15 25"><g fill="#4b4b57"><circle cx="3.5" cy="3.5" r="2.35"/><circle cx="3.5" cy="12.5" r="2.35"/><circle cx="3.5" cy="21.5" r="2.35"/><circle cx="11.2" cy="3.5" r="2.35"/><circle cx="11.2" cy="12.5" r="2.35"/><circle cx="11.2" cy="21.5" r="2.35"/></g></svg>
<svg class="b" style="left:830.30px;top:1994.90px;" width="30.2" height="30.2" viewBox="0 0 24 24"><g fill="none" stroke="#2f9291" stroke-width="2" stroke-linecap="round" stroke-linejoin="round"><rect x="8" y="8" width="14" height="14" rx="2.5"/><path d="M4 16c-1.1 0-2-.9-2-2V4c0-1.1.9-2 2-2h10c1.1 0 2 .9 2 2"/></g></svg>
<svg class="b" style="left:882.90px;top:1994.20px;" width="30.6" height="30.6" viewBox="0 0 24 24"><g fill="none" stroke="#2f9291" stroke-width="2" stroke-linecap="round" stroke-linejoin="round"><path d="M3 6h18"/><path d="M19 6v14c0 1-1 2-2 2H7c-1 0-2-1-2-2V6"/><path d="M8 6V4c0-1 1-2 2-2h4c1 0 2 1 2 2v2"/><path d="M10 11v6M14 11v6"/></g></svg>
<div class="t m" style="top:1999px;font-size:22.5px;line-height:22.5px;font-weight:400;color:#12323b;letter-spacing:0.35px;left:21.07px;width:2000px;text-align:center;transform:scaleX(1.09);">Impact 11</div>
<div class="t m" style="top:1999px;font-size:22px;line-height:22px;font-weight:400;color:#12323b;letter-spacing:0.1px;left:218.55px;width:2000px;text-align:center;transform:scaleX(1.04);">2</div>
<div class="t m" style="top:1999px;font-size:22px;line-height:22px;font-weight:400;color:#12323b;letter-spacing:0.1px;left:416.05px;width:2000px;text-align:center;transform:scaleX(1.04);">4</div>
<div class="t m" style="top:1999px;font-size:22px;line-height:22px;font-weight:400;color:#12323b;letter-spacing:0.1px;left:614.05px;width:2000px;text-align:center;transform:scaleX(1.04);">250</div>
<div class="t m" style="top:1999px;font-size:22px;line-height:22px;font-weight:400;color:#12323b;letter-spacing:0.1px;left:812.05px;width:2000px;text-align:center;transform:scaleX(1.04);">28.8</div>
<div class="t m" style="top:1999px;font-size:22px;line-height:22px;font-weight:400;color:#12323b;letter-spacing:0.1px;left:1010.05px;width:2000px;text-align:center;transform:scaleX(1.04);">22.2</div>
<div class="b " style="left:2186.00px;top:1987.30px;width:43.00px;height:43.00px;background:#fff;border-radius:11px;box-shadow:0 2px 4px rgba(60,60,80,0.25);"></div>
<div class="b " style="left:2374.00px;top:1987.10px;width:62.30px;height:43.20px;background:#dcfce7;border:2px solid #c3f3d3;border-radius:17px;"></div>
<div class="t m" style="top:1999px;font-size:21.5px;line-height:21.5px;font-weight:400;color:#14532d;letter-spacing:0.3px;left:1405.15px;width:2000px;text-align:center;transform:scaleX(1.06);">Oui</div>
<div class="t m" style="top:1999px;font-size:22px;line-height:22px;font-weight:400;color:#12323b;letter-spacing:0.1px;left:1603.05px;width:2000px;text-align:center;transform:scaleX(1.04);">73.0</div>
<div class="t m" style="top:1999px;font-size:22px;line-height:22px;font-weight:400;color:#12323b;letter-spacing:0.1px;left:1801.05px;width:2000px;text-align:center;transform:scaleX(1.04);">5.5</div>
<div class="t m" style="top:1999px;font-size:22px;line-height:22px;font-weight:400;color:#1f3561;letter-spacing:0.1px;left:1998.55px;width:2000px;text-align:center;transform:scaleX(1.04);">62</div>
<div class="t m" style="top:1999px;font-size:22px;line-height:22px;font-weight:400;color:#12323b;letter-spacing:0.1px;left:2196.55px;width:2000px;text-align:center;transform:scaleX(1.04);">0</div>
<svg class="b" style="left:783.50px;top:2069.13px;" width="15" height="25" viewBox="0 0 15 25"><g fill="#4b4b57"><circle cx="3.5" cy="3.5" r="2.35"/><circle cx="3.5" cy="12.5" r="2.35"/><circle cx="3.5" cy="21.5" r="2.35"/><circle cx="11.2" cy="3.5" r="2.35"/><circle cx="11.2" cy="12.5" r="2.35"/><circle cx="11.2" cy="21.5" r="2.35"/></g></svg>
<svg class="b" style="left:830.30px;top:2067.03px;" width="30.2" height="30.2" viewBox="0 0 24 24"><g fill="none" stroke="#2f9291" stroke-width="2" stroke-linecap="round" stroke-linejoin="round"><rect x="8" y="8" width="14" height="14" rx="2.5"/><path d="M4 16c-1.1 0-2-.9-2-2V4c0-1.1.9-2 2-2h10c1.1 0 2 .9 2 2"/></g></svg>
<svg class="b" style="left:882.90px;top:2066.33px;" width="30.6" height="30.6" viewBox="0 0 24 24"><g fill="none" stroke="#2f9291" stroke-width="2" stroke-linecap="round" stroke-linejoin="round"><path d="M3 6h18"/><path d="M19 6v14c0 1-1 2-2 2H7c-1 0-2-1-2-2V6"/><path d="M8 6V4c0-1 1-2 2-2h4c1 0 2 1 2 2v2"/><path d="M10 11v6M14 11v6"/></g></svg>
<div class="t m" style="top:2071px;font-size:22.5px;line-height:22.5px;font-weight:400;color:#12323b;letter-spacing:0.35px;left:21.07px;width:2000px;text-align:center;transform:scaleX(1.09);">Impact 12</div>
<div class="t m" style="top:2071px;font-size:22px;line-height:22px;font-weight:400;color:#12323b;letter-spacing:0.1px;left:218.55px;width:2000px;text-align:center;transform:scaleX(1.04);">2</div>
<div class="t m" style="top:2071px;font-size:22px;line-height:22px;font-weight:400;color:#12323b;letter-spacing:0.1px;left:416.05px;width:2000px;text-align:center;transform:scaleX(1.04);">4</div>
<div class="t m" style="top:2071px;font-size:22px;line-height:22px;font-weight:400;color:#12323b;letter-spacing:0.1px;left:614.05px;width:2000px;text-align:center;transform:scaleX(1.04);">250</div>
<div class="t m" style="top:2071px;font-size:22px;line-height:22px;font-weight:400;color:#12323b;letter-spacing:0.1px;left:812.05px;width:2000px;text-align:center;transform:scaleX(1.04);">14.4</div>
<div class="t m" style="top:2071px;font-size:22px;line-height:22px;font-weight:400;color:#12323b;letter-spacing:0.1px;left:1010.05px;width:2000px;text-align:center;transform:scaleX(1.04);">22.2</div>
<div class="b " style="left:2186.00px;top:2059.43px;width:43.00px;height:43.00px;background:#fff;border-radius:11px;box-shadow:0 2px 4px rgba(60,60,80,0.25);"></div>
<div class="b " style="left:2374.00px;top:2059.23px;width:62.30px;height:43.20px;background:#dcfce7;border:2px solid #c3f3d3;border-radius:17px;"></div>
<div class="t m" style="top:2071px;font-size:21.5px;line-height:21.5px;font-weight:400;color:#14532d;letter-spacing:0.3px;left:1405.15px;width:2000px;text-align:center;transform:scaleX(1.06);">Oui</div>
<div class="t m" style="top:2071px;font-size:22px;line-height:22px;font-weight:400;color:#12323b;letter-spacing:0.1px;left:1603.05px;width:2000px;text-align:center;transform:scaleX(1.04);">73.0</div>
<div class="t m" style="top:2071px;font-size:22px;line-height:22px;font-weight:400;color:#12323b;letter-spacing:0.1px;left:1801.05px;width:2000px;text-align:center;transform:scaleX(1.04);">5.5</div>
<div class="t m" style="top:2071px;font-size:22px;line-height:22px;font-weight:400;color:#1f3561;letter-spacing:0.1px;left:1998.55px;width:2000px;text-align:center;transform:scaleX(1.04);">62</div>
<div class="t m" style="top:2071px;font-size:22px;line-height:22px;font-weight:400;color:#12323b;letter-spacing:0.1px;left:2196.55px;width:2000px;text-align:center;transform:scaleX(1.04);">0</div>
</div></div>
</section>
</main>
</body></html>
